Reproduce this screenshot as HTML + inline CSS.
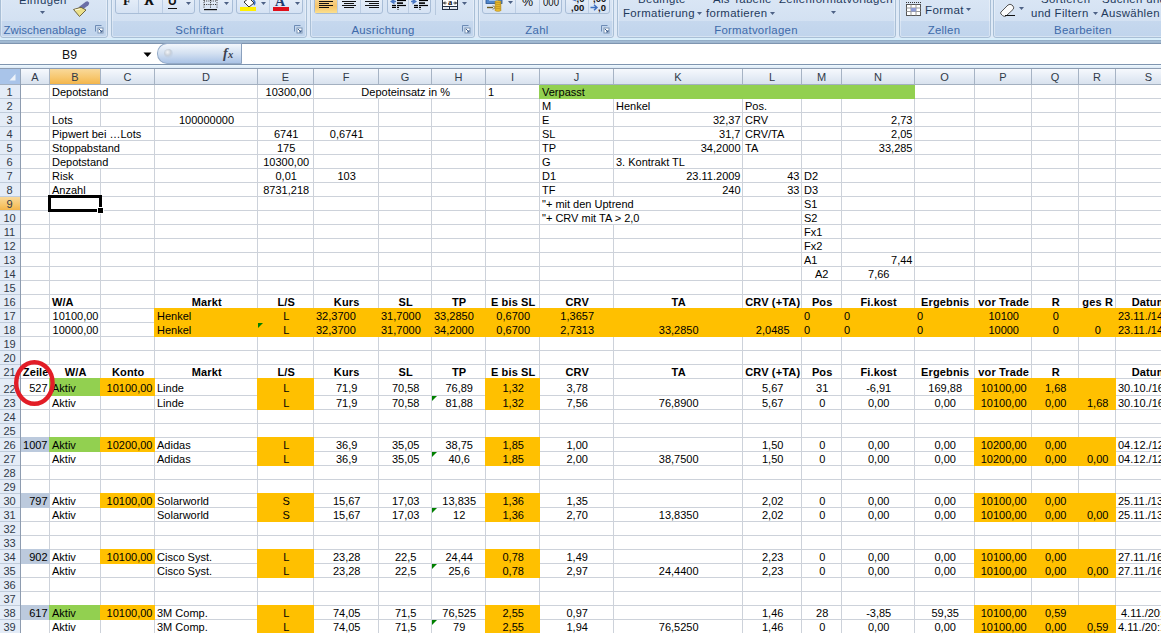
<!DOCTYPE html>
<html><head><meta charset="utf-8"><style>
html,body{margin:0;padding:0;}
body{width:1161px;height:633px;overflow:hidden;position:relative;font-family:"Liberation Sans", sans-serif;background:#fff;}
div{box-sizing:border-box;}
</style></head><body>
<div style="position:absolute;left:0px;top:85px;width:1161px;height:548px;background:#fff;"></div>
<div style="position:absolute;left:21px;top:98px;width:1140px;height:1px;background:#cdd2da;"></div>
<div style="position:absolute;left:21px;top:112px;width:1140px;height:1px;background:#cdd2da;"></div>
<div style="position:absolute;left:21px;top:126px;width:1140px;height:1px;background:#cdd2da;"></div>
<div style="position:absolute;left:21px;top:140px;width:1140px;height:1px;background:#cdd2da;"></div>
<div style="position:absolute;left:21px;top:154px;width:1140px;height:1px;background:#cdd2da;"></div>
<div style="position:absolute;left:21px;top:168px;width:1140px;height:1px;background:#cdd2da;"></div>
<div style="position:absolute;left:21px;top:182px;width:1140px;height:1px;background:#cdd2da;"></div>
<div style="position:absolute;left:21px;top:196px;width:1140px;height:1px;background:#cdd2da;"></div>
<div style="position:absolute;left:21px;top:210px;width:1140px;height:1px;background:#cdd2da;"></div>
<div style="position:absolute;left:21px;top:224px;width:1140px;height:1px;background:#cdd2da;"></div>
<div style="position:absolute;left:21px;top:238px;width:1140px;height:1px;background:#cdd2da;"></div>
<div style="position:absolute;left:21px;top:252px;width:1140px;height:1px;background:#cdd2da;"></div>
<div style="position:absolute;left:21px;top:266px;width:1140px;height:1px;background:#cdd2da;"></div>
<div style="position:absolute;left:21px;top:280px;width:1140px;height:1px;background:#cdd2da;"></div>
<div style="position:absolute;left:21px;top:294px;width:1140px;height:1px;background:#cdd2da;"></div>
<div style="position:absolute;left:21px;top:308px;width:1140px;height:1px;background:#cdd2da;"></div>
<div style="position:absolute;left:21px;top:322px;width:1140px;height:1px;background:#cdd2da;"></div>
<div style="position:absolute;left:21px;top:336px;width:1140px;height:1px;background:#cdd2da;"></div>
<div style="position:absolute;left:21px;top:350px;width:1140px;height:1px;background:#cdd2da;"></div>
<div style="position:absolute;left:21px;top:364px;width:1140px;height:1px;background:#cdd2da;"></div>
<div style="position:absolute;left:21px;top:378px;width:1140px;height:1px;background:#cdd2da;"></div>
<div style="position:absolute;left:21px;top:395px;width:1140px;height:1px;background:#cdd2da;"></div>
<div style="position:absolute;left:21px;top:409px;width:1140px;height:1px;background:#cdd2da;"></div>
<div style="position:absolute;left:21px;top:423px;width:1140px;height:1px;background:#cdd2da;"></div>
<div style="position:absolute;left:21px;top:437px;width:1140px;height:1px;background:#cdd2da;"></div>
<div style="position:absolute;left:21px;top:451px;width:1140px;height:1px;background:#cdd2da;"></div>
<div style="position:absolute;left:21px;top:465px;width:1140px;height:1px;background:#cdd2da;"></div>
<div style="position:absolute;left:21px;top:479px;width:1140px;height:1px;background:#cdd2da;"></div>
<div style="position:absolute;left:21px;top:493px;width:1140px;height:1px;background:#cdd2da;"></div>
<div style="position:absolute;left:21px;top:507px;width:1140px;height:1px;background:#cdd2da;"></div>
<div style="position:absolute;left:21px;top:521px;width:1140px;height:1px;background:#cdd2da;"></div>
<div style="position:absolute;left:21px;top:535px;width:1140px;height:1px;background:#cdd2da;"></div>
<div style="position:absolute;left:21px;top:549px;width:1140px;height:1px;background:#cdd2da;"></div>
<div style="position:absolute;left:21px;top:563px;width:1140px;height:1px;background:#cdd2da;"></div>
<div style="position:absolute;left:21px;top:577px;width:1140px;height:1px;background:#cdd2da;"></div>
<div style="position:absolute;left:21px;top:591px;width:1140px;height:1px;background:#cdd2da;"></div>
<div style="position:absolute;left:21px;top:605px;width:1140px;height:1px;background:#cdd2da;"></div>
<div style="position:absolute;left:21px;top:619px;width:1140px;height:1px;background:#cdd2da;"></div>
<div style="position:absolute;left:49px;top:85px;width:1px;height:13px;background:#cdd2da;"></div>
<div style="position:absolute;left:154px;top:85px;width:1px;height:13px;background:#cdd2da;"></div>
<div style="position:absolute;left:257px;top:85px;width:1px;height:13px;background:#cdd2da;"></div>
<div style="position:absolute;left:313px;top:85px;width:1px;height:13px;background:#cdd2da;"></div>
<div style="position:absolute;left:485px;top:85px;width:1px;height:13px;background:#cdd2da;"></div>
<div style="position:absolute;left:539px;top:85px;width:1px;height:13px;background:#cdd2da;"></div>
<div style="position:absolute;left:613px;top:85px;width:1px;height:13px;background:#cdd2da;"></div>
<div style="position:absolute;left:742px;top:85px;width:1px;height:13px;background:#cdd2da;"></div>
<div style="position:absolute;left:801px;top:85px;width:1px;height:13px;background:#cdd2da;"></div>
<div style="position:absolute;left:841px;top:85px;width:1px;height:13px;background:#cdd2da;"></div>
<div style="position:absolute;left:914px;top:85px;width:1px;height:13px;background:#cdd2da;"></div>
<div style="position:absolute;left:974px;top:85px;width:1px;height:13px;background:#cdd2da;"></div>
<div style="position:absolute;left:1031px;top:85px;width:1px;height:13px;background:#cdd2da;"></div>
<div style="position:absolute;left:1078px;top:85px;width:1px;height:13px;background:#cdd2da;"></div>
<div style="position:absolute;left:1115px;top:85px;width:1px;height:13px;background:#cdd2da;"></div>
<div style="position:absolute;left:49px;top:99px;width:1px;height:13px;background:#cdd2da;"></div>
<div style="position:absolute;left:100px;top:99px;width:1px;height:13px;background:#cdd2da;"></div>
<div style="position:absolute;left:154px;top:99px;width:1px;height:13px;background:#cdd2da;"></div>
<div style="position:absolute;left:257px;top:99px;width:1px;height:13px;background:#cdd2da;"></div>
<div style="position:absolute;left:313px;top:99px;width:1px;height:13px;background:#cdd2da;"></div>
<div style="position:absolute;left:378px;top:99px;width:1px;height:13px;background:#cdd2da;"></div>
<div style="position:absolute;left:431px;top:99px;width:1px;height:13px;background:#cdd2da;"></div>
<div style="position:absolute;left:485px;top:99px;width:1px;height:13px;background:#cdd2da;"></div>
<div style="position:absolute;left:539px;top:99px;width:1px;height:13px;background:#cdd2da;"></div>
<div style="position:absolute;left:613px;top:99px;width:1px;height:13px;background:#cdd2da;"></div>
<div style="position:absolute;left:742px;top:99px;width:1px;height:13px;background:#cdd2da;"></div>
<div style="position:absolute;left:801px;top:99px;width:1px;height:13px;background:#cdd2da;"></div>
<div style="position:absolute;left:841px;top:99px;width:1px;height:13px;background:#cdd2da;"></div>
<div style="position:absolute;left:914px;top:99px;width:1px;height:13px;background:#cdd2da;"></div>
<div style="position:absolute;left:974px;top:99px;width:1px;height:13px;background:#cdd2da;"></div>
<div style="position:absolute;left:1031px;top:99px;width:1px;height:13px;background:#cdd2da;"></div>
<div style="position:absolute;left:1078px;top:99px;width:1px;height:13px;background:#cdd2da;"></div>
<div style="position:absolute;left:1115px;top:99px;width:1px;height:13px;background:#cdd2da;"></div>
<div style="position:absolute;left:49px;top:113px;width:1px;height:13px;background:#cdd2da;"></div>
<div style="position:absolute;left:100px;top:113px;width:1px;height:13px;background:#cdd2da;"></div>
<div style="position:absolute;left:154px;top:113px;width:1px;height:13px;background:#cdd2da;"></div>
<div style="position:absolute;left:257px;top:113px;width:1px;height:13px;background:#cdd2da;"></div>
<div style="position:absolute;left:313px;top:113px;width:1px;height:13px;background:#cdd2da;"></div>
<div style="position:absolute;left:378px;top:113px;width:1px;height:13px;background:#cdd2da;"></div>
<div style="position:absolute;left:431px;top:113px;width:1px;height:13px;background:#cdd2da;"></div>
<div style="position:absolute;left:485px;top:113px;width:1px;height:13px;background:#cdd2da;"></div>
<div style="position:absolute;left:539px;top:113px;width:1px;height:13px;background:#cdd2da;"></div>
<div style="position:absolute;left:613px;top:113px;width:1px;height:13px;background:#cdd2da;"></div>
<div style="position:absolute;left:742px;top:113px;width:1px;height:13px;background:#cdd2da;"></div>
<div style="position:absolute;left:801px;top:113px;width:1px;height:13px;background:#cdd2da;"></div>
<div style="position:absolute;left:841px;top:113px;width:1px;height:13px;background:#cdd2da;"></div>
<div style="position:absolute;left:914px;top:113px;width:1px;height:13px;background:#cdd2da;"></div>
<div style="position:absolute;left:974px;top:113px;width:1px;height:13px;background:#cdd2da;"></div>
<div style="position:absolute;left:1031px;top:113px;width:1px;height:13px;background:#cdd2da;"></div>
<div style="position:absolute;left:1078px;top:113px;width:1px;height:13px;background:#cdd2da;"></div>
<div style="position:absolute;left:1115px;top:113px;width:1px;height:13px;background:#cdd2da;"></div>
<div style="position:absolute;left:49px;top:127px;width:1px;height:13px;background:#cdd2da;"></div>
<div style="position:absolute;left:154px;top:127px;width:1px;height:13px;background:#cdd2da;"></div>
<div style="position:absolute;left:257px;top:127px;width:1px;height:13px;background:#cdd2da;"></div>
<div style="position:absolute;left:313px;top:127px;width:1px;height:13px;background:#cdd2da;"></div>
<div style="position:absolute;left:378px;top:127px;width:1px;height:13px;background:#cdd2da;"></div>
<div style="position:absolute;left:431px;top:127px;width:1px;height:13px;background:#cdd2da;"></div>
<div style="position:absolute;left:485px;top:127px;width:1px;height:13px;background:#cdd2da;"></div>
<div style="position:absolute;left:539px;top:127px;width:1px;height:13px;background:#cdd2da;"></div>
<div style="position:absolute;left:613px;top:127px;width:1px;height:13px;background:#cdd2da;"></div>
<div style="position:absolute;left:742px;top:127px;width:1px;height:13px;background:#cdd2da;"></div>
<div style="position:absolute;left:801px;top:127px;width:1px;height:13px;background:#cdd2da;"></div>
<div style="position:absolute;left:841px;top:127px;width:1px;height:13px;background:#cdd2da;"></div>
<div style="position:absolute;left:914px;top:127px;width:1px;height:13px;background:#cdd2da;"></div>
<div style="position:absolute;left:974px;top:127px;width:1px;height:13px;background:#cdd2da;"></div>
<div style="position:absolute;left:1031px;top:127px;width:1px;height:13px;background:#cdd2da;"></div>
<div style="position:absolute;left:1078px;top:127px;width:1px;height:13px;background:#cdd2da;"></div>
<div style="position:absolute;left:1115px;top:127px;width:1px;height:13px;background:#cdd2da;"></div>
<div style="position:absolute;left:49px;top:141px;width:1px;height:13px;background:#cdd2da;"></div>
<div style="position:absolute;left:154px;top:141px;width:1px;height:13px;background:#cdd2da;"></div>
<div style="position:absolute;left:257px;top:141px;width:1px;height:13px;background:#cdd2da;"></div>
<div style="position:absolute;left:313px;top:141px;width:1px;height:13px;background:#cdd2da;"></div>
<div style="position:absolute;left:378px;top:141px;width:1px;height:13px;background:#cdd2da;"></div>
<div style="position:absolute;left:431px;top:141px;width:1px;height:13px;background:#cdd2da;"></div>
<div style="position:absolute;left:485px;top:141px;width:1px;height:13px;background:#cdd2da;"></div>
<div style="position:absolute;left:539px;top:141px;width:1px;height:13px;background:#cdd2da;"></div>
<div style="position:absolute;left:613px;top:141px;width:1px;height:13px;background:#cdd2da;"></div>
<div style="position:absolute;left:742px;top:141px;width:1px;height:13px;background:#cdd2da;"></div>
<div style="position:absolute;left:801px;top:141px;width:1px;height:13px;background:#cdd2da;"></div>
<div style="position:absolute;left:841px;top:141px;width:1px;height:13px;background:#cdd2da;"></div>
<div style="position:absolute;left:914px;top:141px;width:1px;height:13px;background:#cdd2da;"></div>
<div style="position:absolute;left:974px;top:141px;width:1px;height:13px;background:#cdd2da;"></div>
<div style="position:absolute;left:1031px;top:141px;width:1px;height:13px;background:#cdd2da;"></div>
<div style="position:absolute;left:1078px;top:141px;width:1px;height:13px;background:#cdd2da;"></div>
<div style="position:absolute;left:1115px;top:141px;width:1px;height:13px;background:#cdd2da;"></div>
<div style="position:absolute;left:49px;top:155px;width:1px;height:13px;background:#cdd2da;"></div>
<div style="position:absolute;left:154px;top:155px;width:1px;height:13px;background:#cdd2da;"></div>
<div style="position:absolute;left:257px;top:155px;width:1px;height:13px;background:#cdd2da;"></div>
<div style="position:absolute;left:313px;top:155px;width:1px;height:13px;background:#cdd2da;"></div>
<div style="position:absolute;left:378px;top:155px;width:1px;height:13px;background:#cdd2da;"></div>
<div style="position:absolute;left:431px;top:155px;width:1px;height:13px;background:#cdd2da;"></div>
<div style="position:absolute;left:485px;top:155px;width:1px;height:13px;background:#cdd2da;"></div>
<div style="position:absolute;left:539px;top:155px;width:1px;height:13px;background:#cdd2da;"></div>
<div style="position:absolute;left:613px;top:155px;width:1px;height:13px;background:#cdd2da;"></div>
<div style="position:absolute;left:742px;top:155px;width:1px;height:13px;background:#cdd2da;"></div>
<div style="position:absolute;left:801px;top:155px;width:1px;height:13px;background:#cdd2da;"></div>
<div style="position:absolute;left:841px;top:155px;width:1px;height:13px;background:#cdd2da;"></div>
<div style="position:absolute;left:914px;top:155px;width:1px;height:13px;background:#cdd2da;"></div>
<div style="position:absolute;left:974px;top:155px;width:1px;height:13px;background:#cdd2da;"></div>
<div style="position:absolute;left:1031px;top:155px;width:1px;height:13px;background:#cdd2da;"></div>
<div style="position:absolute;left:1078px;top:155px;width:1px;height:13px;background:#cdd2da;"></div>
<div style="position:absolute;left:1115px;top:155px;width:1px;height:13px;background:#cdd2da;"></div>
<div style="position:absolute;left:49px;top:169px;width:1px;height:13px;background:#cdd2da;"></div>
<div style="position:absolute;left:100px;top:169px;width:1px;height:13px;background:#cdd2da;"></div>
<div style="position:absolute;left:154px;top:169px;width:1px;height:13px;background:#cdd2da;"></div>
<div style="position:absolute;left:257px;top:169px;width:1px;height:13px;background:#cdd2da;"></div>
<div style="position:absolute;left:313px;top:169px;width:1px;height:13px;background:#cdd2da;"></div>
<div style="position:absolute;left:378px;top:169px;width:1px;height:13px;background:#cdd2da;"></div>
<div style="position:absolute;left:431px;top:169px;width:1px;height:13px;background:#cdd2da;"></div>
<div style="position:absolute;left:485px;top:169px;width:1px;height:13px;background:#cdd2da;"></div>
<div style="position:absolute;left:539px;top:169px;width:1px;height:13px;background:#cdd2da;"></div>
<div style="position:absolute;left:613px;top:169px;width:1px;height:13px;background:#cdd2da;"></div>
<div style="position:absolute;left:742px;top:169px;width:1px;height:13px;background:#cdd2da;"></div>
<div style="position:absolute;left:801px;top:169px;width:1px;height:13px;background:#cdd2da;"></div>
<div style="position:absolute;left:841px;top:169px;width:1px;height:13px;background:#cdd2da;"></div>
<div style="position:absolute;left:914px;top:169px;width:1px;height:13px;background:#cdd2da;"></div>
<div style="position:absolute;left:974px;top:169px;width:1px;height:13px;background:#cdd2da;"></div>
<div style="position:absolute;left:1031px;top:169px;width:1px;height:13px;background:#cdd2da;"></div>
<div style="position:absolute;left:1078px;top:169px;width:1px;height:13px;background:#cdd2da;"></div>
<div style="position:absolute;left:1115px;top:169px;width:1px;height:13px;background:#cdd2da;"></div>
<div style="position:absolute;left:49px;top:183px;width:1px;height:13px;background:#cdd2da;"></div>
<div style="position:absolute;left:100px;top:183px;width:1px;height:13px;background:#cdd2da;"></div>
<div style="position:absolute;left:154px;top:183px;width:1px;height:13px;background:#cdd2da;"></div>
<div style="position:absolute;left:257px;top:183px;width:1px;height:13px;background:#cdd2da;"></div>
<div style="position:absolute;left:313px;top:183px;width:1px;height:13px;background:#cdd2da;"></div>
<div style="position:absolute;left:378px;top:183px;width:1px;height:13px;background:#cdd2da;"></div>
<div style="position:absolute;left:431px;top:183px;width:1px;height:13px;background:#cdd2da;"></div>
<div style="position:absolute;left:485px;top:183px;width:1px;height:13px;background:#cdd2da;"></div>
<div style="position:absolute;left:539px;top:183px;width:1px;height:13px;background:#cdd2da;"></div>
<div style="position:absolute;left:613px;top:183px;width:1px;height:13px;background:#cdd2da;"></div>
<div style="position:absolute;left:742px;top:183px;width:1px;height:13px;background:#cdd2da;"></div>
<div style="position:absolute;left:801px;top:183px;width:1px;height:13px;background:#cdd2da;"></div>
<div style="position:absolute;left:841px;top:183px;width:1px;height:13px;background:#cdd2da;"></div>
<div style="position:absolute;left:914px;top:183px;width:1px;height:13px;background:#cdd2da;"></div>
<div style="position:absolute;left:974px;top:183px;width:1px;height:13px;background:#cdd2da;"></div>
<div style="position:absolute;left:1031px;top:183px;width:1px;height:13px;background:#cdd2da;"></div>
<div style="position:absolute;left:1078px;top:183px;width:1px;height:13px;background:#cdd2da;"></div>
<div style="position:absolute;left:1115px;top:183px;width:1px;height:13px;background:#cdd2da;"></div>
<div style="position:absolute;left:49px;top:197px;width:1px;height:13px;background:#cdd2da;"></div>
<div style="position:absolute;left:100px;top:197px;width:1px;height:13px;background:#cdd2da;"></div>
<div style="position:absolute;left:154px;top:197px;width:1px;height:13px;background:#cdd2da;"></div>
<div style="position:absolute;left:257px;top:197px;width:1px;height:13px;background:#cdd2da;"></div>
<div style="position:absolute;left:313px;top:197px;width:1px;height:13px;background:#cdd2da;"></div>
<div style="position:absolute;left:378px;top:197px;width:1px;height:13px;background:#cdd2da;"></div>
<div style="position:absolute;left:431px;top:197px;width:1px;height:13px;background:#cdd2da;"></div>
<div style="position:absolute;left:485px;top:197px;width:1px;height:13px;background:#cdd2da;"></div>
<div style="position:absolute;left:539px;top:197px;width:1px;height:13px;background:#cdd2da;"></div>
<div style="position:absolute;left:742px;top:197px;width:1px;height:13px;background:#cdd2da;"></div>
<div style="position:absolute;left:801px;top:197px;width:1px;height:13px;background:#cdd2da;"></div>
<div style="position:absolute;left:841px;top:197px;width:1px;height:13px;background:#cdd2da;"></div>
<div style="position:absolute;left:914px;top:197px;width:1px;height:13px;background:#cdd2da;"></div>
<div style="position:absolute;left:974px;top:197px;width:1px;height:13px;background:#cdd2da;"></div>
<div style="position:absolute;left:1031px;top:197px;width:1px;height:13px;background:#cdd2da;"></div>
<div style="position:absolute;left:1078px;top:197px;width:1px;height:13px;background:#cdd2da;"></div>
<div style="position:absolute;left:1115px;top:197px;width:1px;height:13px;background:#cdd2da;"></div>
<div style="position:absolute;left:49px;top:211px;width:1px;height:13px;background:#cdd2da;"></div>
<div style="position:absolute;left:100px;top:211px;width:1px;height:13px;background:#cdd2da;"></div>
<div style="position:absolute;left:154px;top:211px;width:1px;height:13px;background:#cdd2da;"></div>
<div style="position:absolute;left:257px;top:211px;width:1px;height:13px;background:#cdd2da;"></div>
<div style="position:absolute;left:313px;top:211px;width:1px;height:13px;background:#cdd2da;"></div>
<div style="position:absolute;left:378px;top:211px;width:1px;height:13px;background:#cdd2da;"></div>
<div style="position:absolute;left:431px;top:211px;width:1px;height:13px;background:#cdd2da;"></div>
<div style="position:absolute;left:485px;top:211px;width:1px;height:13px;background:#cdd2da;"></div>
<div style="position:absolute;left:539px;top:211px;width:1px;height:13px;background:#cdd2da;"></div>
<div style="position:absolute;left:742px;top:211px;width:1px;height:13px;background:#cdd2da;"></div>
<div style="position:absolute;left:801px;top:211px;width:1px;height:13px;background:#cdd2da;"></div>
<div style="position:absolute;left:841px;top:211px;width:1px;height:13px;background:#cdd2da;"></div>
<div style="position:absolute;left:914px;top:211px;width:1px;height:13px;background:#cdd2da;"></div>
<div style="position:absolute;left:974px;top:211px;width:1px;height:13px;background:#cdd2da;"></div>
<div style="position:absolute;left:1031px;top:211px;width:1px;height:13px;background:#cdd2da;"></div>
<div style="position:absolute;left:1078px;top:211px;width:1px;height:13px;background:#cdd2da;"></div>
<div style="position:absolute;left:1115px;top:211px;width:1px;height:13px;background:#cdd2da;"></div>
<div style="position:absolute;left:49px;top:225px;width:1px;height:13px;background:#cdd2da;"></div>
<div style="position:absolute;left:100px;top:225px;width:1px;height:13px;background:#cdd2da;"></div>
<div style="position:absolute;left:154px;top:225px;width:1px;height:13px;background:#cdd2da;"></div>
<div style="position:absolute;left:257px;top:225px;width:1px;height:13px;background:#cdd2da;"></div>
<div style="position:absolute;left:313px;top:225px;width:1px;height:13px;background:#cdd2da;"></div>
<div style="position:absolute;left:378px;top:225px;width:1px;height:13px;background:#cdd2da;"></div>
<div style="position:absolute;left:431px;top:225px;width:1px;height:13px;background:#cdd2da;"></div>
<div style="position:absolute;left:485px;top:225px;width:1px;height:13px;background:#cdd2da;"></div>
<div style="position:absolute;left:539px;top:225px;width:1px;height:13px;background:#cdd2da;"></div>
<div style="position:absolute;left:613px;top:225px;width:1px;height:13px;background:#cdd2da;"></div>
<div style="position:absolute;left:742px;top:225px;width:1px;height:13px;background:#cdd2da;"></div>
<div style="position:absolute;left:801px;top:225px;width:1px;height:13px;background:#cdd2da;"></div>
<div style="position:absolute;left:841px;top:225px;width:1px;height:13px;background:#cdd2da;"></div>
<div style="position:absolute;left:914px;top:225px;width:1px;height:13px;background:#cdd2da;"></div>
<div style="position:absolute;left:974px;top:225px;width:1px;height:13px;background:#cdd2da;"></div>
<div style="position:absolute;left:1031px;top:225px;width:1px;height:13px;background:#cdd2da;"></div>
<div style="position:absolute;left:1078px;top:225px;width:1px;height:13px;background:#cdd2da;"></div>
<div style="position:absolute;left:1115px;top:225px;width:1px;height:13px;background:#cdd2da;"></div>
<div style="position:absolute;left:49px;top:239px;width:1px;height:13px;background:#cdd2da;"></div>
<div style="position:absolute;left:100px;top:239px;width:1px;height:13px;background:#cdd2da;"></div>
<div style="position:absolute;left:154px;top:239px;width:1px;height:13px;background:#cdd2da;"></div>
<div style="position:absolute;left:257px;top:239px;width:1px;height:13px;background:#cdd2da;"></div>
<div style="position:absolute;left:313px;top:239px;width:1px;height:13px;background:#cdd2da;"></div>
<div style="position:absolute;left:378px;top:239px;width:1px;height:13px;background:#cdd2da;"></div>
<div style="position:absolute;left:431px;top:239px;width:1px;height:13px;background:#cdd2da;"></div>
<div style="position:absolute;left:485px;top:239px;width:1px;height:13px;background:#cdd2da;"></div>
<div style="position:absolute;left:539px;top:239px;width:1px;height:13px;background:#cdd2da;"></div>
<div style="position:absolute;left:613px;top:239px;width:1px;height:13px;background:#cdd2da;"></div>
<div style="position:absolute;left:742px;top:239px;width:1px;height:13px;background:#cdd2da;"></div>
<div style="position:absolute;left:801px;top:239px;width:1px;height:13px;background:#cdd2da;"></div>
<div style="position:absolute;left:841px;top:239px;width:1px;height:13px;background:#cdd2da;"></div>
<div style="position:absolute;left:914px;top:239px;width:1px;height:13px;background:#cdd2da;"></div>
<div style="position:absolute;left:974px;top:239px;width:1px;height:13px;background:#cdd2da;"></div>
<div style="position:absolute;left:1031px;top:239px;width:1px;height:13px;background:#cdd2da;"></div>
<div style="position:absolute;left:1078px;top:239px;width:1px;height:13px;background:#cdd2da;"></div>
<div style="position:absolute;left:1115px;top:239px;width:1px;height:13px;background:#cdd2da;"></div>
<div style="position:absolute;left:49px;top:253px;width:1px;height:13px;background:#cdd2da;"></div>
<div style="position:absolute;left:100px;top:253px;width:1px;height:13px;background:#cdd2da;"></div>
<div style="position:absolute;left:154px;top:253px;width:1px;height:13px;background:#cdd2da;"></div>
<div style="position:absolute;left:257px;top:253px;width:1px;height:13px;background:#cdd2da;"></div>
<div style="position:absolute;left:313px;top:253px;width:1px;height:13px;background:#cdd2da;"></div>
<div style="position:absolute;left:378px;top:253px;width:1px;height:13px;background:#cdd2da;"></div>
<div style="position:absolute;left:431px;top:253px;width:1px;height:13px;background:#cdd2da;"></div>
<div style="position:absolute;left:485px;top:253px;width:1px;height:13px;background:#cdd2da;"></div>
<div style="position:absolute;left:539px;top:253px;width:1px;height:13px;background:#cdd2da;"></div>
<div style="position:absolute;left:613px;top:253px;width:1px;height:13px;background:#cdd2da;"></div>
<div style="position:absolute;left:742px;top:253px;width:1px;height:13px;background:#cdd2da;"></div>
<div style="position:absolute;left:801px;top:253px;width:1px;height:13px;background:#cdd2da;"></div>
<div style="position:absolute;left:841px;top:253px;width:1px;height:13px;background:#cdd2da;"></div>
<div style="position:absolute;left:914px;top:253px;width:1px;height:13px;background:#cdd2da;"></div>
<div style="position:absolute;left:974px;top:253px;width:1px;height:13px;background:#cdd2da;"></div>
<div style="position:absolute;left:1031px;top:253px;width:1px;height:13px;background:#cdd2da;"></div>
<div style="position:absolute;left:1078px;top:253px;width:1px;height:13px;background:#cdd2da;"></div>
<div style="position:absolute;left:1115px;top:253px;width:1px;height:13px;background:#cdd2da;"></div>
<div style="position:absolute;left:49px;top:267px;width:1px;height:13px;background:#cdd2da;"></div>
<div style="position:absolute;left:100px;top:267px;width:1px;height:13px;background:#cdd2da;"></div>
<div style="position:absolute;left:154px;top:267px;width:1px;height:13px;background:#cdd2da;"></div>
<div style="position:absolute;left:257px;top:267px;width:1px;height:13px;background:#cdd2da;"></div>
<div style="position:absolute;left:313px;top:267px;width:1px;height:13px;background:#cdd2da;"></div>
<div style="position:absolute;left:378px;top:267px;width:1px;height:13px;background:#cdd2da;"></div>
<div style="position:absolute;left:431px;top:267px;width:1px;height:13px;background:#cdd2da;"></div>
<div style="position:absolute;left:485px;top:267px;width:1px;height:13px;background:#cdd2da;"></div>
<div style="position:absolute;left:539px;top:267px;width:1px;height:13px;background:#cdd2da;"></div>
<div style="position:absolute;left:613px;top:267px;width:1px;height:13px;background:#cdd2da;"></div>
<div style="position:absolute;left:742px;top:267px;width:1px;height:13px;background:#cdd2da;"></div>
<div style="position:absolute;left:801px;top:267px;width:1px;height:13px;background:#cdd2da;"></div>
<div style="position:absolute;left:841px;top:267px;width:1px;height:13px;background:#cdd2da;"></div>
<div style="position:absolute;left:914px;top:267px;width:1px;height:13px;background:#cdd2da;"></div>
<div style="position:absolute;left:974px;top:267px;width:1px;height:13px;background:#cdd2da;"></div>
<div style="position:absolute;left:1031px;top:267px;width:1px;height:13px;background:#cdd2da;"></div>
<div style="position:absolute;left:1078px;top:267px;width:1px;height:13px;background:#cdd2da;"></div>
<div style="position:absolute;left:1115px;top:267px;width:1px;height:13px;background:#cdd2da;"></div>
<div style="position:absolute;left:49px;top:281px;width:1px;height:13px;background:#cdd2da;"></div>
<div style="position:absolute;left:100px;top:281px;width:1px;height:13px;background:#cdd2da;"></div>
<div style="position:absolute;left:154px;top:281px;width:1px;height:13px;background:#cdd2da;"></div>
<div style="position:absolute;left:257px;top:281px;width:1px;height:13px;background:#cdd2da;"></div>
<div style="position:absolute;left:313px;top:281px;width:1px;height:13px;background:#cdd2da;"></div>
<div style="position:absolute;left:378px;top:281px;width:1px;height:13px;background:#cdd2da;"></div>
<div style="position:absolute;left:431px;top:281px;width:1px;height:13px;background:#cdd2da;"></div>
<div style="position:absolute;left:485px;top:281px;width:1px;height:13px;background:#cdd2da;"></div>
<div style="position:absolute;left:539px;top:281px;width:1px;height:13px;background:#cdd2da;"></div>
<div style="position:absolute;left:613px;top:281px;width:1px;height:13px;background:#cdd2da;"></div>
<div style="position:absolute;left:742px;top:281px;width:1px;height:13px;background:#cdd2da;"></div>
<div style="position:absolute;left:801px;top:281px;width:1px;height:13px;background:#cdd2da;"></div>
<div style="position:absolute;left:841px;top:281px;width:1px;height:13px;background:#cdd2da;"></div>
<div style="position:absolute;left:914px;top:281px;width:1px;height:13px;background:#cdd2da;"></div>
<div style="position:absolute;left:974px;top:281px;width:1px;height:13px;background:#cdd2da;"></div>
<div style="position:absolute;left:1031px;top:281px;width:1px;height:13px;background:#cdd2da;"></div>
<div style="position:absolute;left:1078px;top:281px;width:1px;height:13px;background:#cdd2da;"></div>
<div style="position:absolute;left:1115px;top:281px;width:1px;height:13px;background:#cdd2da;"></div>
<div style="position:absolute;left:49px;top:295px;width:1px;height:13px;background:#cdd2da;"></div>
<div style="position:absolute;left:100px;top:295px;width:1px;height:13px;background:#cdd2da;"></div>
<div style="position:absolute;left:154px;top:295px;width:1px;height:13px;background:#cdd2da;"></div>
<div style="position:absolute;left:257px;top:295px;width:1px;height:13px;background:#cdd2da;"></div>
<div style="position:absolute;left:313px;top:295px;width:1px;height:13px;background:#cdd2da;"></div>
<div style="position:absolute;left:378px;top:295px;width:1px;height:13px;background:#cdd2da;"></div>
<div style="position:absolute;left:431px;top:295px;width:1px;height:13px;background:#cdd2da;"></div>
<div style="position:absolute;left:485px;top:295px;width:1px;height:13px;background:#cdd2da;"></div>
<div style="position:absolute;left:539px;top:295px;width:1px;height:13px;background:#cdd2da;"></div>
<div style="position:absolute;left:613px;top:295px;width:1px;height:13px;background:#cdd2da;"></div>
<div style="position:absolute;left:742px;top:295px;width:1px;height:13px;background:#cdd2da;"></div>
<div style="position:absolute;left:801px;top:295px;width:1px;height:13px;background:#cdd2da;"></div>
<div style="position:absolute;left:841px;top:295px;width:1px;height:13px;background:#cdd2da;"></div>
<div style="position:absolute;left:914px;top:295px;width:1px;height:13px;background:#cdd2da;"></div>
<div style="position:absolute;left:974px;top:295px;width:1px;height:13px;background:#cdd2da;"></div>
<div style="position:absolute;left:1031px;top:295px;width:1px;height:13px;background:#cdd2da;"></div>
<div style="position:absolute;left:1078px;top:295px;width:1px;height:13px;background:#cdd2da;"></div>
<div style="position:absolute;left:1115px;top:295px;width:1px;height:13px;background:#cdd2da;"></div>
<div style="position:absolute;left:49px;top:309px;width:1px;height:13px;background:#cdd2da;"></div>
<div style="position:absolute;left:100px;top:309px;width:1px;height:13px;background:#cdd2da;"></div>
<div style="position:absolute;left:154px;top:309px;width:1px;height:13px;background:#cdd2da;"></div>
<div style="position:absolute;left:257px;top:309px;width:1px;height:13px;background:#cdd2da;"></div>
<div style="position:absolute;left:313px;top:309px;width:1px;height:13px;background:#cdd2da;"></div>
<div style="position:absolute;left:378px;top:309px;width:1px;height:13px;background:#cdd2da;"></div>
<div style="position:absolute;left:431px;top:309px;width:1px;height:13px;background:#cdd2da;"></div>
<div style="position:absolute;left:485px;top:309px;width:1px;height:13px;background:#cdd2da;"></div>
<div style="position:absolute;left:539px;top:309px;width:1px;height:13px;background:#cdd2da;"></div>
<div style="position:absolute;left:613px;top:309px;width:1px;height:13px;background:#cdd2da;"></div>
<div style="position:absolute;left:742px;top:309px;width:1px;height:13px;background:#cdd2da;"></div>
<div style="position:absolute;left:801px;top:309px;width:1px;height:13px;background:#cdd2da;"></div>
<div style="position:absolute;left:841px;top:309px;width:1px;height:13px;background:#cdd2da;"></div>
<div style="position:absolute;left:914px;top:309px;width:1px;height:13px;background:#cdd2da;"></div>
<div style="position:absolute;left:974px;top:309px;width:1px;height:13px;background:#cdd2da;"></div>
<div style="position:absolute;left:1031px;top:309px;width:1px;height:13px;background:#cdd2da;"></div>
<div style="position:absolute;left:1078px;top:309px;width:1px;height:13px;background:#cdd2da;"></div>
<div style="position:absolute;left:1115px;top:309px;width:1px;height:13px;background:#cdd2da;"></div>
<div style="position:absolute;left:49px;top:323px;width:1px;height:13px;background:#cdd2da;"></div>
<div style="position:absolute;left:100px;top:323px;width:1px;height:13px;background:#cdd2da;"></div>
<div style="position:absolute;left:154px;top:323px;width:1px;height:13px;background:#cdd2da;"></div>
<div style="position:absolute;left:257px;top:323px;width:1px;height:13px;background:#cdd2da;"></div>
<div style="position:absolute;left:313px;top:323px;width:1px;height:13px;background:#cdd2da;"></div>
<div style="position:absolute;left:378px;top:323px;width:1px;height:13px;background:#cdd2da;"></div>
<div style="position:absolute;left:431px;top:323px;width:1px;height:13px;background:#cdd2da;"></div>
<div style="position:absolute;left:485px;top:323px;width:1px;height:13px;background:#cdd2da;"></div>
<div style="position:absolute;left:539px;top:323px;width:1px;height:13px;background:#cdd2da;"></div>
<div style="position:absolute;left:613px;top:323px;width:1px;height:13px;background:#cdd2da;"></div>
<div style="position:absolute;left:742px;top:323px;width:1px;height:13px;background:#cdd2da;"></div>
<div style="position:absolute;left:801px;top:323px;width:1px;height:13px;background:#cdd2da;"></div>
<div style="position:absolute;left:841px;top:323px;width:1px;height:13px;background:#cdd2da;"></div>
<div style="position:absolute;left:914px;top:323px;width:1px;height:13px;background:#cdd2da;"></div>
<div style="position:absolute;left:974px;top:323px;width:1px;height:13px;background:#cdd2da;"></div>
<div style="position:absolute;left:1031px;top:323px;width:1px;height:13px;background:#cdd2da;"></div>
<div style="position:absolute;left:1078px;top:323px;width:1px;height:13px;background:#cdd2da;"></div>
<div style="position:absolute;left:1115px;top:323px;width:1px;height:13px;background:#cdd2da;"></div>
<div style="position:absolute;left:49px;top:337px;width:1px;height:13px;background:#cdd2da;"></div>
<div style="position:absolute;left:100px;top:337px;width:1px;height:13px;background:#cdd2da;"></div>
<div style="position:absolute;left:154px;top:337px;width:1px;height:13px;background:#cdd2da;"></div>
<div style="position:absolute;left:257px;top:337px;width:1px;height:13px;background:#cdd2da;"></div>
<div style="position:absolute;left:313px;top:337px;width:1px;height:13px;background:#cdd2da;"></div>
<div style="position:absolute;left:378px;top:337px;width:1px;height:13px;background:#cdd2da;"></div>
<div style="position:absolute;left:431px;top:337px;width:1px;height:13px;background:#cdd2da;"></div>
<div style="position:absolute;left:485px;top:337px;width:1px;height:13px;background:#cdd2da;"></div>
<div style="position:absolute;left:539px;top:337px;width:1px;height:13px;background:#cdd2da;"></div>
<div style="position:absolute;left:613px;top:337px;width:1px;height:13px;background:#cdd2da;"></div>
<div style="position:absolute;left:742px;top:337px;width:1px;height:13px;background:#cdd2da;"></div>
<div style="position:absolute;left:801px;top:337px;width:1px;height:13px;background:#cdd2da;"></div>
<div style="position:absolute;left:841px;top:337px;width:1px;height:13px;background:#cdd2da;"></div>
<div style="position:absolute;left:914px;top:337px;width:1px;height:13px;background:#cdd2da;"></div>
<div style="position:absolute;left:974px;top:337px;width:1px;height:13px;background:#cdd2da;"></div>
<div style="position:absolute;left:1031px;top:337px;width:1px;height:13px;background:#cdd2da;"></div>
<div style="position:absolute;left:1078px;top:337px;width:1px;height:13px;background:#cdd2da;"></div>
<div style="position:absolute;left:1115px;top:337px;width:1px;height:13px;background:#cdd2da;"></div>
<div style="position:absolute;left:49px;top:351px;width:1px;height:13px;background:#cdd2da;"></div>
<div style="position:absolute;left:100px;top:351px;width:1px;height:13px;background:#cdd2da;"></div>
<div style="position:absolute;left:154px;top:351px;width:1px;height:13px;background:#cdd2da;"></div>
<div style="position:absolute;left:257px;top:351px;width:1px;height:13px;background:#cdd2da;"></div>
<div style="position:absolute;left:313px;top:351px;width:1px;height:13px;background:#cdd2da;"></div>
<div style="position:absolute;left:378px;top:351px;width:1px;height:13px;background:#cdd2da;"></div>
<div style="position:absolute;left:431px;top:351px;width:1px;height:13px;background:#cdd2da;"></div>
<div style="position:absolute;left:485px;top:351px;width:1px;height:13px;background:#cdd2da;"></div>
<div style="position:absolute;left:539px;top:351px;width:1px;height:13px;background:#cdd2da;"></div>
<div style="position:absolute;left:613px;top:351px;width:1px;height:13px;background:#cdd2da;"></div>
<div style="position:absolute;left:742px;top:351px;width:1px;height:13px;background:#cdd2da;"></div>
<div style="position:absolute;left:801px;top:351px;width:1px;height:13px;background:#cdd2da;"></div>
<div style="position:absolute;left:841px;top:351px;width:1px;height:13px;background:#cdd2da;"></div>
<div style="position:absolute;left:914px;top:351px;width:1px;height:13px;background:#cdd2da;"></div>
<div style="position:absolute;left:974px;top:351px;width:1px;height:13px;background:#cdd2da;"></div>
<div style="position:absolute;left:1031px;top:351px;width:1px;height:13px;background:#cdd2da;"></div>
<div style="position:absolute;left:1078px;top:351px;width:1px;height:13px;background:#cdd2da;"></div>
<div style="position:absolute;left:1115px;top:351px;width:1px;height:13px;background:#cdd2da;"></div>
<div style="position:absolute;left:100px;top:365px;width:1px;height:13px;background:#cdd2da;"></div>
<div style="position:absolute;left:154px;top:365px;width:1px;height:13px;background:#cdd2da;"></div>
<div style="position:absolute;left:257px;top:365px;width:1px;height:13px;background:#cdd2da;"></div>
<div style="position:absolute;left:313px;top:365px;width:1px;height:13px;background:#cdd2da;"></div>
<div style="position:absolute;left:378px;top:365px;width:1px;height:13px;background:#cdd2da;"></div>
<div style="position:absolute;left:431px;top:365px;width:1px;height:13px;background:#cdd2da;"></div>
<div style="position:absolute;left:485px;top:365px;width:1px;height:13px;background:#cdd2da;"></div>
<div style="position:absolute;left:539px;top:365px;width:1px;height:13px;background:#cdd2da;"></div>
<div style="position:absolute;left:613px;top:365px;width:1px;height:13px;background:#cdd2da;"></div>
<div style="position:absolute;left:742px;top:365px;width:1px;height:13px;background:#cdd2da;"></div>
<div style="position:absolute;left:801px;top:365px;width:1px;height:13px;background:#cdd2da;"></div>
<div style="position:absolute;left:841px;top:365px;width:1px;height:13px;background:#cdd2da;"></div>
<div style="position:absolute;left:914px;top:365px;width:1px;height:13px;background:#cdd2da;"></div>
<div style="position:absolute;left:974px;top:365px;width:1px;height:13px;background:#cdd2da;"></div>
<div style="position:absolute;left:1031px;top:365px;width:1px;height:13px;background:#cdd2da;"></div>
<div style="position:absolute;left:1078px;top:365px;width:1px;height:13px;background:#cdd2da;"></div>
<div style="position:absolute;left:1115px;top:365px;width:1px;height:13px;background:#cdd2da;"></div>
<div style="position:absolute;left:49px;top:379px;width:1px;height:16px;background:#cdd2da;"></div>
<div style="position:absolute;left:100px;top:379px;width:1px;height:16px;background:#cdd2da;"></div>
<div style="position:absolute;left:154px;top:379px;width:1px;height:16px;background:#cdd2da;"></div>
<div style="position:absolute;left:257px;top:379px;width:1px;height:16px;background:#cdd2da;"></div>
<div style="position:absolute;left:313px;top:379px;width:1px;height:16px;background:#cdd2da;"></div>
<div style="position:absolute;left:378px;top:379px;width:1px;height:16px;background:#cdd2da;"></div>
<div style="position:absolute;left:431px;top:379px;width:1px;height:16px;background:#cdd2da;"></div>
<div style="position:absolute;left:485px;top:379px;width:1px;height:16px;background:#cdd2da;"></div>
<div style="position:absolute;left:539px;top:379px;width:1px;height:16px;background:#cdd2da;"></div>
<div style="position:absolute;left:613px;top:379px;width:1px;height:16px;background:#cdd2da;"></div>
<div style="position:absolute;left:742px;top:379px;width:1px;height:16px;background:#cdd2da;"></div>
<div style="position:absolute;left:801px;top:379px;width:1px;height:16px;background:#cdd2da;"></div>
<div style="position:absolute;left:841px;top:379px;width:1px;height:16px;background:#cdd2da;"></div>
<div style="position:absolute;left:914px;top:379px;width:1px;height:16px;background:#cdd2da;"></div>
<div style="position:absolute;left:974px;top:379px;width:1px;height:16px;background:#cdd2da;"></div>
<div style="position:absolute;left:1031px;top:379px;width:1px;height:16px;background:#cdd2da;"></div>
<div style="position:absolute;left:1078px;top:379px;width:1px;height:16px;background:#cdd2da;"></div>
<div style="position:absolute;left:1115px;top:379px;width:1px;height:16px;background:#cdd2da;"></div>
<div style="position:absolute;left:49px;top:396px;width:1px;height:13px;background:#cdd2da;"></div>
<div style="position:absolute;left:100px;top:396px;width:1px;height:13px;background:#cdd2da;"></div>
<div style="position:absolute;left:154px;top:396px;width:1px;height:13px;background:#cdd2da;"></div>
<div style="position:absolute;left:257px;top:396px;width:1px;height:13px;background:#cdd2da;"></div>
<div style="position:absolute;left:313px;top:396px;width:1px;height:13px;background:#cdd2da;"></div>
<div style="position:absolute;left:378px;top:396px;width:1px;height:13px;background:#cdd2da;"></div>
<div style="position:absolute;left:431px;top:396px;width:1px;height:13px;background:#cdd2da;"></div>
<div style="position:absolute;left:485px;top:396px;width:1px;height:13px;background:#cdd2da;"></div>
<div style="position:absolute;left:539px;top:396px;width:1px;height:13px;background:#cdd2da;"></div>
<div style="position:absolute;left:613px;top:396px;width:1px;height:13px;background:#cdd2da;"></div>
<div style="position:absolute;left:742px;top:396px;width:1px;height:13px;background:#cdd2da;"></div>
<div style="position:absolute;left:801px;top:396px;width:1px;height:13px;background:#cdd2da;"></div>
<div style="position:absolute;left:841px;top:396px;width:1px;height:13px;background:#cdd2da;"></div>
<div style="position:absolute;left:914px;top:396px;width:1px;height:13px;background:#cdd2da;"></div>
<div style="position:absolute;left:974px;top:396px;width:1px;height:13px;background:#cdd2da;"></div>
<div style="position:absolute;left:1031px;top:396px;width:1px;height:13px;background:#cdd2da;"></div>
<div style="position:absolute;left:1078px;top:396px;width:1px;height:13px;background:#cdd2da;"></div>
<div style="position:absolute;left:1115px;top:396px;width:1px;height:13px;background:#cdd2da;"></div>
<div style="position:absolute;left:49px;top:410px;width:1px;height:13px;background:#cdd2da;"></div>
<div style="position:absolute;left:100px;top:410px;width:1px;height:13px;background:#cdd2da;"></div>
<div style="position:absolute;left:154px;top:410px;width:1px;height:13px;background:#cdd2da;"></div>
<div style="position:absolute;left:257px;top:410px;width:1px;height:13px;background:#cdd2da;"></div>
<div style="position:absolute;left:313px;top:410px;width:1px;height:13px;background:#cdd2da;"></div>
<div style="position:absolute;left:378px;top:410px;width:1px;height:13px;background:#cdd2da;"></div>
<div style="position:absolute;left:431px;top:410px;width:1px;height:13px;background:#cdd2da;"></div>
<div style="position:absolute;left:485px;top:410px;width:1px;height:13px;background:#cdd2da;"></div>
<div style="position:absolute;left:539px;top:410px;width:1px;height:13px;background:#cdd2da;"></div>
<div style="position:absolute;left:613px;top:410px;width:1px;height:13px;background:#cdd2da;"></div>
<div style="position:absolute;left:742px;top:410px;width:1px;height:13px;background:#cdd2da;"></div>
<div style="position:absolute;left:801px;top:410px;width:1px;height:13px;background:#cdd2da;"></div>
<div style="position:absolute;left:841px;top:410px;width:1px;height:13px;background:#cdd2da;"></div>
<div style="position:absolute;left:914px;top:410px;width:1px;height:13px;background:#cdd2da;"></div>
<div style="position:absolute;left:974px;top:410px;width:1px;height:13px;background:#cdd2da;"></div>
<div style="position:absolute;left:1031px;top:410px;width:1px;height:13px;background:#cdd2da;"></div>
<div style="position:absolute;left:1078px;top:410px;width:1px;height:13px;background:#cdd2da;"></div>
<div style="position:absolute;left:1115px;top:410px;width:1px;height:13px;background:#cdd2da;"></div>
<div style="position:absolute;left:49px;top:424px;width:1px;height:13px;background:#cdd2da;"></div>
<div style="position:absolute;left:100px;top:424px;width:1px;height:13px;background:#cdd2da;"></div>
<div style="position:absolute;left:154px;top:424px;width:1px;height:13px;background:#cdd2da;"></div>
<div style="position:absolute;left:257px;top:424px;width:1px;height:13px;background:#cdd2da;"></div>
<div style="position:absolute;left:313px;top:424px;width:1px;height:13px;background:#cdd2da;"></div>
<div style="position:absolute;left:378px;top:424px;width:1px;height:13px;background:#cdd2da;"></div>
<div style="position:absolute;left:431px;top:424px;width:1px;height:13px;background:#cdd2da;"></div>
<div style="position:absolute;left:485px;top:424px;width:1px;height:13px;background:#cdd2da;"></div>
<div style="position:absolute;left:539px;top:424px;width:1px;height:13px;background:#cdd2da;"></div>
<div style="position:absolute;left:613px;top:424px;width:1px;height:13px;background:#cdd2da;"></div>
<div style="position:absolute;left:742px;top:424px;width:1px;height:13px;background:#cdd2da;"></div>
<div style="position:absolute;left:801px;top:424px;width:1px;height:13px;background:#cdd2da;"></div>
<div style="position:absolute;left:841px;top:424px;width:1px;height:13px;background:#cdd2da;"></div>
<div style="position:absolute;left:914px;top:424px;width:1px;height:13px;background:#cdd2da;"></div>
<div style="position:absolute;left:974px;top:424px;width:1px;height:13px;background:#cdd2da;"></div>
<div style="position:absolute;left:1031px;top:424px;width:1px;height:13px;background:#cdd2da;"></div>
<div style="position:absolute;left:1078px;top:424px;width:1px;height:13px;background:#cdd2da;"></div>
<div style="position:absolute;left:1115px;top:424px;width:1px;height:13px;background:#cdd2da;"></div>
<div style="position:absolute;left:49px;top:438px;width:1px;height:13px;background:#cdd2da;"></div>
<div style="position:absolute;left:100px;top:438px;width:1px;height:13px;background:#cdd2da;"></div>
<div style="position:absolute;left:154px;top:438px;width:1px;height:13px;background:#cdd2da;"></div>
<div style="position:absolute;left:257px;top:438px;width:1px;height:13px;background:#cdd2da;"></div>
<div style="position:absolute;left:313px;top:438px;width:1px;height:13px;background:#cdd2da;"></div>
<div style="position:absolute;left:378px;top:438px;width:1px;height:13px;background:#cdd2da;"></div>
<div style="position:absolute;left:431px;top:438px;width:1px;height:13px;background:#cdd2da;"></div>
<div style="position:absolute;left:485px;top:438px;width:1px;height:13px;background:#cdd2da;"></div>
<div style="position:absolute;left:539px;top:438px;width:1px;height:13px;background:#cdd2da;"></div>
<div style="position:absolute;left:613px;top:438px;width:1px;height:13px;background:#cdd2da;"></div>
<div style="position:absolute;left:742px;top:438px;width:1px;height:13px;background:#cdd2da;"></div>
<div style="position:absolute;left:801px;top:438px;width:1px;height:13px;background:#cdd2da;"></div>
<div style="position:absolute;left:841px;top:438px;width:1px;height:13px;background:#cdd2da;"></div>
<div style="position:absolute;left:914px;top:438px;width:1px;height:13px;background:#cdd2da;"></div>
<div style="position:absolute;left:974px;top:438px;width:1px;height:13px;background:#cdd2da;"></div>
<div style="position:absolute;left:1031px;top:438px;width:1px;height:13px;background:#cdd2da;"></div>
<div style="position:absolute;left:1078px;top:438px;width:1px;height:13px;background:#cdd2da;"></div>
<div style="position:absolute;left:1115px;top:438px;width:1px;height:13px;background:#cdd2da;"></div>
<div style="position:absolute;left:49px;top:452px;width:1px;height:13px;background:#cdd2da;"></div>
<div style="position:absolute;left:100px;top:452px;width:1px;height:13px;background:#cdd2da;"></div>
<div style="position:absolute;left:154px;top:452px;width:1px;height:13px;background:#cdd2da;"></div>
<div style="position:absolute;left:257px;top:452px;width:1px;height:13px;background:#cdd2da;"></div>
<div style="position:absolute;left:313px;top:452px;width:1px;height:13px;background:#cdd2da;"></div>
<div style="position:absolute;left:378px;top:452px;width:1px;height:13px;background:#cdd2da;"></div>
<div style="position:absolute;left:431px;top:452px;width:1px;height:13px;background:#cdd2da;"></div>
<div style="position:absolute;left:485px;top:452px;width:1px;height:13px;background:#cdd2da;"></div>
<div style="position:absolute;left:539px;top:452px;width:1px;height:13px;background:#cdd2da;"></div>
<div style="position:absolute;left:613px;top:452px;width:1px;height:13px;background:#cdd2da;"></div>
<div style="position:absolute;left:742px;top:452px;width:1px;height:13px;background:#cdd2da;"></div>
<div style="position:absolute;left:801px;top:452px;width:1px;height:13px;background:#cdd2da;"></div>
<div style="position:absolute;left:841px;top:452px;width:1px;height:13px;background:#cdd2da;"></div>
<div style="position:absolute;left:914px;top:452px;width:1px;height:13px;background:#cdd2da;"></div>
<div style="position:absolute;left:974px;top:452px;width:1px;height:13px;background:#cdd2da;"></div>
<div style="position:absolute;left:1031px;top:452px;width:1px;height:13px;background:#cdd2da;"></div>
<div style="position:absolute;left:1078px;top:452px;width:1px;height:13px;background:#cdd2da;"></div>
<div style="position:absolute;left:1115px;top:452px;width:1px;height:13px;background:#cdd2da;"></div>
<div style="position:absolute;left:49px;top:466px;width:1px;height:13px;background:#cdd2da;"></div>
<div style="position:absolute;left:100px;top:466px;width:1px;height:13px;background:#cdd2da;"></div>
<div style="position:absolute;left:154px;top:466px;width:1px;height:13px;background:#cdd2da;"></div>
<div style="position:absolute;left:257px;top:466px;width:1px;height:13px;background:#cdd2da;"></div>
<div style="position:absolute;left:313px;top:466px;width:1px;height:13px;background:#cdd2da;"></div>
<div style="position:absolute;left:378px;top:466px;width:1px;height:13px;background:#cdd2da;"></div>
<div style="position:absolute;left:431px;top:466px;width:1px;height:13px;background:#cdd2da;"></div>
<div style="position:absolute;left:485px;top:466px;width:1px;height:13px;background:#cdd2da;"></div>
<div style="position:absolute;left:539px;top:466px;width:1px;height:13px;background:#cdd2da;"></div>
<div style="position:absolute;left:613px;top:466px;width:1px;height:13px;background:#cdd2da;"></div>
<div style="position:absolute;left:742px;top:466px;width:1px;height:13px;background:#cdd2da;"></div>
<div style="position:absolute;left:801px;top:466px;width:1px;height:13px;background:#cdd2da;"></div>
<div style="position:absolute;left:841px;top:466px;width:1px;height:13px;background:#cdd2da;"></div>
<div style="position:absolute;left:914px;top:466px;width:1px;height:13px;background:#cdd2da;"></div>
<div style="position:absolute;left:974px;top:466px;width:1px;height:13px;background:#cdd2da;"></div>
<div style="position:absolute;left:1031px;top:466px;width:1px;height:13px;background:#cdd2da;"></div>
<div style="position:absolute;left:1078px;top:466px;width:1px;height:13px;background:#cdd2da;"></div>
<div style="position:absolute;left:1115px;top:466px;width:1px;height:13px;background:#cdd2da;"></div>
<div style="position:absolute;left:49px;top:480px;width:1px;height:13px;background:#cdd2da;"></div>
<div style="position:absolute;left:100px;top:480px;width:1px;height:13px;background:#cdd2da;"></div>
<div style="position:absolute;left:154px;top:480px;width:1px;height:13px;background:#cdd2da;"></div>
<div style="position:absolute;left:257px;top:480px;width:1px;height:13px;background:#cdd2da;"></div>
<div style="position:absolute;left:313px;top:480px;width:1px;height:13px;background:#cdd2da;"></div>
<div style="position:absolute;left:378px;top:480px;width:1px;height:13px;background:#cdd2da;"></div>
<div style="position:absolute;left:431px;top:480px;width:1px;height:13px;background:#cdd2da;"></div>
<div style="position:absolute;left:485px;top:480px;width:1px;height:13px;background:#cdd2da;"></div>
<div style="position:absolute;left:539px;top:480px;width:1px;height:13px;background:#cdd2da;"></div>
<div style="position:absolute;left:613px;top:480px;width:1px;height:13px;background:#cdd2da;"></div>
<div style="position:absolute;left:742px;top:480px;width:1px;height:13px;background:#cdd2da;"></div>
<div style="position:absolute;left:801px;top:480px;width:1px;height:13px;background:#cdd2da;"></div>
<div style="position:absolute;left:841px;top:480px;width:1px;height:13px;background:#cdd2da;"></div>
<div style="position:absolute;left:914px;top:480px;width:1px;height:13px;background:#cdd2da;"></div>
<div style="position:absolute;left:974px;top:480px;width:1px;height:13px;background:#cdd2da;"></div>
<div style="position:absolute;left:1031px;top:480px;width:1px;height:13px;background:#cdd2da;"></div>
<div style="position:absolute;left:1078px;top:480px;width:1px;height:13px;background:#cdd2da;"></div>
<div style="position:absolute;left:1115px;top:480px;width:1px;height:13px;background:#cdd2da;"></div>
<div style="position:absolute;left:49px;top:494px;width:1px;height:13px;background:#cdd2da;"></div>
<div style="position:absolute;left:100px;top:494px;width:1px;height:13px;background:#cdd2da;"></div>
<div style="position:absolute;left:154px;top:494px;width:1px;height:13px;background:#cdd2da;"></div>
<div style="position:absolute;left:257px;top:494px;width:1px;height:13px;background:#cdd2da;"></div>
<div style="position:absolute;left:313px;top:494px;width:1px;height:13px;background:#cdd2da;"></div>
<div style="position:absolute;left:378px;top:494px;width:1px;height:13px;background:#cdd2da;"></div>
<div style="position:absolute;left:431px;top:494px;width:1px;height:13px;background:#cdd2da;"></div>
<div style="position:absolute;left:485px;top:494px;width:1px;height:13px;background:#cdd2da;"></div>
<div style="position:absolute;left:539px;top:494px;width:1px;height:13px;background:#cdd2da;"></div>
<div style="position:absolute;left:613px;top:494px;width:1px;height:13px;background:#cdd2da;"></div>
<div style="position:absolute;left:742px;top:494px;width:1px;height:13px;background:#cdd2da;"></div>
<div style="position:absolute;left:801px;top:494px;width:1px;height:13px;background:#cdd2da;"></div>
<div style="position:absolute;left:841px;top:494px;width:1px;height:13px;background:#cdd2da;"></div>
<div style="position:absolute;left:914px;top:494px;width:1px;height:13px;background:#cdd2da;"></div>
<div style="position:absolute;left:974px;top:494px;width:1px;height:13px;background:#cdd2da;"></div>
<div style="position:absolute;left:1031px;top:494px;width:1px;height:13px;background:#cdd2da;"></div>
<div style="position:absolute;left:1078px;top:494px;width:1px;height:13px;background:#cdd2da;"></div>
<div style="position:absolute;left:1115px;top:494px;width:1px;height:13px;background:#cdd2da;"></div>
<div style="position:absolute;left:49px;top:508px;width:1px;height:13px;background:#cdd2da;"></div>
<div style="position:absolute;left:100px;top:508px;width:1px;height:13px;background:#cdd2da;"></div>
<div style="position:absolute;left:154px;top:508px;width:1px;height:13px;background:#cdd2da;"></div>
<div style="position:absolute;left:257px;top:508px;width:1px;height:13px;background:#cdd2da;"></div>
<div style="position:absolute;left:313px;top:508px;width:1px;height:13px;background:#cdd2da;"></div>
<div style="position:absolute;left:378px;top:508px;width:1px;height:13px;background:#cdd2da;"></div>
<div style="position:absolute;left:431px;top:508px;width:1px;height:13px;background:#cdd2da;"></div>
<div style="position:absolute;left:485px;top:508px;width:1px;height:13px;background:#cdd2da;"></div>
<div style="position:absolute;left:539px;top:508px;width:1px;height:13px;background:#cdd2da;"></div>
<div style="position:absolute;left:613px;top:508px;width:1px;height:13px;background:#cdd2da;"></div>
<div style="position:absolute;left:742px;top:508px;width:1px;height:13px;background:#cdd2da;"></div>
<div style="position:absolute;left:801px;top:508px;width:1px;height:13px;background:#cdd2da;"></div>
<div style="position:absolute;left:841px;top:508px;width:1px;height:13px;background:#cdd2da;"></div>
<div style="position:absolute;left:914px;top:508px;width:1px;height:13px;background:#cdd2da;"></div>
<div style="position:absolute;left:974px;top:508px;width:1px;height:13px;background:#cdd2da;"></div>
<div style="position:absolute;left:1031px;top:508px;width:1px;height:13px;background:#cdd2da;"></div>
<div style="position:absolute;left:1078px;top:508px;width:1px;height:13px;background:#cdd2da;"></div>
<div style="position:absolute;left:1115px;top:508px;width:1px;height:13px;background:#cdd2da;"></div>
<div style="position:absolute;left:49px;top:522px;width:1px;height:13px;background:#cdd2da;"></div>
<div style="position:absolute;left:100px;top:522px;width:1px;height:13px;background:#cdd2da;"></div>
<div style="position:absolute;left:154px;top:522px;width:1px;height:13px;background:#cdd2da;"></div>
<div style="position:absolute;left:257px;top:522px;width:1px;height:13px;background:#cdd2da;"></div>
<div style="position:absolute;left:313px;top:522px;width:1px;height:13px;background:#cdd2da;"></div>
<div style="position:absolute;left:378px;top:522px;width:1px;height:13px;background:#cdd2da;"></div>
<div style="position:absolute;left:431px;top:522px;width:1px;height:13px;background:#cdd2da;"></div>
<div style="position:absolute;left:485px;top:522px;width:1px;height:13px;background:#cdd2da;"></div>
<div style="position:absolute;left:539px;top:522px;width:1px;height:13px;background:#cdd2da;"></div>
<div style="position:absolute;left:613px;top:522px;width:1px;height:13px;background:#cdd2da;"></div>
<div style="position:absolute;left:742px;top:522px;width:1px;height:13px;background:#cdd2da;"></div>
<div style="position:absolute;left:801px;top:522px;width:1px;height:13px;background:#cdd2da;"></div>
<div style="position:absolute;left:841px;top:522px;width:1px;height:13px;background:#cdd2da;"></div>
<div style="position:absolute;left:914px;top:522px;width:1px;height:13px;background:#cdd2da;"></div>
<div style="position:absolute;left:974px;top:522px;width:1px;height:13px;background:#cdd2da;"></div>
<div style="position:absolute;left:1031px;top:522px;width:1px;height:13px;background:#cdd2da;"></div>
<div style="position:absolute;left:1078px;top:522px;width:1px;height:13px;background:#cdd2da;"></div>
<div style="position:absolute;left:1115px;top:522px;width:1px;height:13px;background:#cdd2da;"></div>
<div style="position:absolute;left:49px;top:536px;width:1px;height:13px;background:#cdd2da;"></div>
<div style="position:absolute;left:100px;top:536px;width:1px;height:13px;background:#cdd2da;"></div>
<div style="position:absolute;left:154px;top:536px;width:1px;height:13px;background:#cdd2da;"></div>
<div style="position:absolute;left:257px;top:536px;width:1px;height:13px;background:#cdd2da;"></div>
<div style="position:absolute;left:313px;top:536px;width:1px;height:13px;background:#cdd2da;"></div>
<div style="position:absolute;left:378px;top:536px;width:1px;height:13px;background:#cdd2da;"></div>
<div style="position:absolute;left:431px;top:536px;width:1px;height:13px;background:#cdd2da;"></div>
<div style="position:absolute;left:485px;top:536px;width:1px;height:13px;background:#cdd2da;"></div>
<div style="position:absolute;left:539px;top:536px;width:1px;height:13px;background:#cdd2da;"></div>
<div style="position:absolute;left:613px;top:536px;width:1px;height:13px;background:#cdd2da;"></div>
<div style="position:absolute;left:742px;top:536px;width:1px;height:13px;background:#cdd2da;"></div>
<div style="position:absolute;left:801px;top:536px;width:1px;height:13px;background:#cdd2da;"></div>
<div style="position:absolute;left:841px;top:536px;width:1px;height:13px;background:#cdd2da;"></div>
<div style="position:absolute;left:914px;top:536px;width:1px;height:13px;background:#cdd2da;"></div>
<div style="position:absolute;left:974px;top:536px;width:1px;height:13px;background:#cdd2da;"></div>
<div style="position:absolute;left:1031px;top:536px;width:1px;height:13px;background:#cdd2da;"></div>
<div style="position:absolute;left:1078px;top:536px;width:1px;height:13px;background:#cdd2da;"></div>
<div style="position:absolute;left:1115px;top:536px;width:1px;height:13px;background:#cdd2da;"></div>
<div style="position:absolute;left:49px;top:550px;width:1px;height:13px;background:#cdd2da;"></div>
<div style="position:absolute;left:100px;top:550px;width:1px;height:13px;background:#cdd2da;"></div>
<div style="position:absolute;left:154px;top:550px;width:1px;height:13px;background:#cdd2da;"></div>
<div style="position:absolute;left:257px;top:550px;width:1px;height:13px;background:#cdd2da;"></div>
<div style="position:absolute;left:313px;top:550px;width:1px;height:13px;background:#cdd2da;"></div>
<div style="position:absolute;left:378px;top:550px;width:1px;height:13px;background:#cdd2da;"></div>
<div style="position:absolute;left:431px;top:550px;width:1px;height:13px;background:#cdd2da;"></div>
<div style="position:absolute;left:485px;top:550px;width:1px;height:13px;background:#cdd2da;"></div>
<div style="position:absolute;left:539px;top:550px;width:1px;height:13px;background:#cdd2da;"></div>
<div style="position:absolute;left:613px;top:550px;width:1px;height:13px;background:#cdd2da;"></div>
<div style="position:absolute;left:742px;top:550px;width:1px;height:13px;background:#cdd2da;"></div>
<div style="position:absolute;left:801px;top:550px;width:1px;height:13px;background:#cdd2da;"></div>
<div style="position:absolute;left:841px;top:550px;width:1px;height:13px;background:#cdd2da;"></div>
<div style="position:absolute;left:914px;top:550px;width:1px;height:13px;background:#cdd2da;"></div>
<div style="position:absolute;left:974px;top:550px;width:1px;height:13px;background:#cdd2da;"></div>
<div style="position:absolute;left:1031px;top:550px;width:1px;height:13px;background:#cdd2da;"></div>
<div style="position:absolute;left:1078px;top:550px;width:1px;height:13px;background:#cdd2da;"></div>
<div style="position:absolute;left:1115px;top:550px;width:1px;height:13px;background:#cdd2da;"></div>
<div style="position:absolute;left:49px;top:564px;width:1px;height:13px;background:#cdd2da;"></div>
<div style="position:absolute;left:100px;top:564px;width:1px;height:13px;background:#cdd2da;"></div>
<div style="position:absolute;left:154px;top:564px;width:1px;height:13px;background:#cdd2da;"></div>
<div style="position:absolute;left:257px;top:564px;width:1px;height:13px;background:#cdd2da;"></div>
<div style="position:absolute;left:313px;top:564px;width:1px;height:13px;background:#cdd2da;"></div>
<div style="position:absolute;left:378px;top:564px;width:1px;height:13px;background:#cdd2da;"></div>
<div style="position:absolute;left:431px;top:564px;width:1px;height:13px;background:#cdd2da;"></div>
<div style="position:absolute;left:485px;top:564px;width:1px;height:13px;background:#cdd2da;"></div>
<div style="position:absolute;left:539px;top:564px;width:1px;height:13px;background:#cdd2da;"></div>
<div style="position:absolute;left:613px;top:564px;width:1px;height:13px;background:#cdd2da;"></div>
<div style="position:absolute;left:742px;top:564px;width:1px;height:13px;background:#cdd2da;"></div>
<div style="position:absolute;left:801px;top:564px;width:1px;height:13px;background:#cdd2da;"></div>
<div style="position:absolute;left:841px;top:564px;width:1px;height:13px;background:#cdd2da;"></div>
<div style="position:absolute;left:914px;top:564px;width:1px;height:13px;background:#cdd2da;"></div>
<div style="position:absolute;left:974px;top:564px;width:1px;height:13px;background:#cdd2da;"></div>
<div style="position:absolute;left:1031px;top:564px;width:1px;height:13px;background:#cdd2da;"></div>
<div style="position:absolute;left:1078px;top:564px;width:1px;height:13px;background:#cdd2da;"></div>
<div style="position:absolute;left:1115px;top:564px;width:1px;height:13px;background:#cdd2da;"></div>
<div style="position:absolute;left:49px;top:578px;width:1px;height:13px;background:#cdd2da;"></div>
<div style="position:absolute;left:100px;top:578px;width:1px;height:13px;background:#cdd2da;"></div>
<div style="position:absolute;left:154px;top:578px;width:1px;height:13px;background:#cdd2da;"></div>
<div style="position:absolute;left:257px;top:578px;width:1px;height:13px;background:#cdd2da;"></div>
<div style="position:absolute;left:313px;top:578px;width:1px;height:13px;background:#cdd2da;"></div>
<div style="position:absolute;left:378px;top:578px;width:1px;height:13px;background:#cdd2da;"></div>
<div style="position:absolute;left:431px;top:578px;width:1px;height:13px;background:#cdd2da;"></div>
<div style="position:absolute;left:485px;top:578px;width:1px;height:13px;background:#cdd2da;"></div>
<div style="position:absolute;left:539px;top:578px;width:1px;height:13px;background:#cdd2da;"></div>
<div style="position:absolute;left:613px;top:578px;width:1px;height:13px;background:#cdd2da;"></div>
<div style="position:absolute;left:742px;top:578px;width:1px;height:13px;background:#cdd2da;"></div>
<div style="position:absolute;left:801px;top:578px;width:1px;height:13px;background:#cdd2da;"></div>
<div style="position:absolute;left:841px;top:578px;width:1px;height:13px;background:#cdd2da;"></div>
<div style="position:absolute;left:914px;top:578px;width:1px;height:13px;background:#cdd2da;"></div>
<div style="position:absolute;left:974px;top:578px;width:1px;height:13px;background:#cdd2da;"></div>
<div style="position:absolute;left:1031px;top:578px;width:1px;height:13px;background:#cdd2da;"></div>
<div style="position:absolute;left:1078px;top:578px;width:1px;height:13px;background:#cdd2da;"></div>
<div style="position:absolute;left:1115px;top:578px;width:1px;height:13px;background:#cdd2da;"></div>
<div style="position:absolute;left:49px;top:592px;width:1px;height:13px;background:#cdd2da;"></div>
<div style="position:absolute;left:100px;top:592px;width:1px;height:13px;background:#cdd2da;"></div>
<div style="position:absolute;left:154px;top:592px;width:1px;height:13px;background:#cdd2da;"></div>
<div style="position:absolute;left:257px;top:592px;width:1px;height:13px;background:#cdd2da;"></div>
<div style="position:absolute;left:313px;top:592px;width:1px;height:13px;background:#cdd2da;"></div>
<div style="position:absolute;left:378px;top:592px;width:1px;height:13px;background:#cdd2da;"></div>
<div style="position:absolute;left:431px;top:592px;width:1px;height:13px;background:#cdd2da;"></div>
<div style="position:absolute;left:485px;top:592px;width:1px;height:13px;background:#cdd2da;"></div>
<div style="position:absolute;left:539px;top:592px;width:1px;height:13px;background:#cdd2da;"></div>
<div style="position:absolute;left:613px;top:592px;width:1px;height:13px;background:#cdd2da;"></div>
<div style="position:absolute;left:742px;top:592px;width:1px;height:13px;background:#cdd2da;"></div>
<div style="position:absolute;left:801px;top:592px;width:1px;height:13px;background:#cdd2da;"></div>
<div style="position:absolute;left:841px;top:592px;width:1px;height:13px;background:#cdd2da;"></div>
<div style="position:absolute;left:914px;top:592px;width:1px;height:13px;background:#cdd2da;"></div>
<div style="position:absolute;left:974px;top:592px;width:1px;height:13px;background:#cdd2da;"></div>
<div style="position:absolute;left:1031px;top:592px;width:1px;height:13px;background:#cdd2da;"></div>
<div style="position:absolute;left:1078px;top:592px;width:1px;height:13px;background:#cdd2da;"></div>
<div style="position:absolute;left:1115px;top:592px;width:1px;height:13px;background:#cdd2da;"></div>
<div style="position:absolute;left:49px;top:606px;width:1px;height:13px;background:#cdd2da;"></div>
<div style="position:absolute;left:100px;top:606px;width:1px;height:13px;background:#cdd2da;"></div>
<div style="position:absolute;left:154px;top:606px;width:1px;height:13px;background:#cdd2da;"></div>
<div style="position:absolute;left:257px;top:606px;width:1px;height:13px;background:#cdd2da;"></div>
<div style="position:absolute;left:313px;top:606px;width:1px;height:13px;background:#cdd2da;"></div>
<div style="position:absolute;left:378px;top:606px;width:1px;height:13px;background:#cdd2da;"></div>
<div style="position:absolute;left:431px;top:606px;width:1px;height:13px;background:#cdd2da;"></div>
<div style="position:absolute;left:485px;top:606px;width:1px;height:13px;background:#cdd2da;"></div>
<div style="position:absolute;left:539px;top:606px;width:1px;height:13px;background:#cdd2da;"></div>
<div style="position:absolute;left:613px;top:606px;width:1px;height:13px;background:#cdd2da;"></div>
<div style="position:absolute;left:742px;top:606px;width:1px;height:13px;background:#cdd2da;"></div>
<div style="position:absolute;left:801px;top:606px;width:1px;height:13px;background:#cdd2da;"></div>
<div style="position:absolute;left:841px;top:606px;width:1px;height:13px;background:#cdd2da;"></div>
<div style="position:absolute;left:914px;top:606px;width:1px;height:13px;background:#cdd2da;"></div>
<div style="position:absolute;left:974px;top:606px;width:1px;height:13px;background:#cdd2da;"></div>
<div style="position:absolute;left:1031px;top:606px;width:1px;height:13px;background:#cdd2da;"></div>
<div style="position:absolute;left:1078px;top:606px;width:1px;height:13px;background:#cdd2da;"></div>
<div style="position:absolute;left:1115px;top:606px;width:1px;height:13px;background:#cdd2da;"></div>
<div style="position:absolute;left:49px;top:620px;width:1px;height:13px;background:#cdd2da;"></div>
<div style="position:absolute;left:100px;top:620px;width:1px;height:13px;background:#cdd2da;"></div>
<div style="position:absolute;left:154px;top:620px;width:1px;height:13px;background:#cdd2da;"></div>
<div style="position:absolute;left:257px;top:620px;width:1px;height:13px;background:#cdd2da;"></div>
<div style="position:absolute;left:313px;top:620px;width:1px;height:13px;background:#cdd2da;"></div>
<div style="position:absolute;left:378px;top:620px;width:1px;height:13px;background:#cdd2da;"></div>
<div style="position:absolute;left:431px;top:620px;width:1px;height:13px;background:#cdd2da;"></div>
<div style="position:absolute;left:485px;top:620px;width:1px;height:13px;background:#cdd2da;"></div>
<div style="position:absolute;left:539px;top:620px;width:1px;height:13px;background:#cdd2da;"></div>
<div style="position:absolute;left:613px;top:620px;width:1px;height:13px;background:#cdd2da;"></div>
<div style="position:absolute;left:742px;top:620px;width:1px;height:13px;background:#cdd2da;"></div>
<div style="position:absolute;left:801px;top:620px;width:1px;height:13px;background:#cdd2da;"></div>
<div style="position:absolute;left:841px;top:620px;width:1px;height:13px;background:#cdd2da;"></div>
<div style="position:absolute;left:914px;top:620px;width:1px;height:13px;background:#cdd2da;"></div>
<div style="position:absolute;left:974px;top:620px;width:1px;height:13px;background:#cdd2da;"></div>
<div style="position:absolute;left:1031px;top:620px;width:1px;height:13px;background:#cdd2da;"></div>
<div style="position:absolute;left:1078px;top:620px;width:1px;height:13px;background:#cdd2da;"></div>
<div style="position:absolute;left:1115px;top:620px;width:1px;height:13px;background:#cdd2da;"></div>
<div style="position:absolute;left:539px;top:84px;width:75px;height:15px;background:#92d050;"></div>
<div style="position:absolute;left:613px;top:84px;width:130px;height:15px;background:#92d050;"></div>
<div style="position:absolute;left:742px;top:84px;width:60px;height:15px;background:#92d050;"></div>
<div style="position:absolute;left:801px;top:84px;width:41px;height:15px;background:#92d050;"></div>
<div style="position:absolute;left:841px;top:84px;width:74px;height:15px;background:#92d050;"></div>
<div style="position:absolute;left:154px;top:308px;width:104px;height:15px;background:#ffc000;"></div>
<div style="position:absolute;left:257px;top:308px;width:57px;height:15px;background:#ffc000;"></div>
<div style="position:absolute;left:313px;top:308px;width:66px;height:15px;background:#ffc000;"></div>
<div style="position:absolute;left:378px;top:308px;width:54px;height:15px;background:#ffc000;"></div>
<div style="position:absolute;left:431px;top:308px;width:55px;height:15px;background:#ffc000;"></div>
<div style="position:absolute;left:485px;top:308px;width:55px;height:15px;background:#ffc000;"></div>
<div style="position:absolute;left:539px;top:308px;width:75px;height:15px;background:#ffc000;"></div>
<div style="position:absolute;left:613px;top:308px;width:130px;height:15px;background:#ffc000;"></div>
<div style="position:absolute;left:742px;top:308px;width:60px;height:15px;background:#ffc000;"></div>
<div style="position:absolute;left:801px;top:308px;width:41px;height:15px;background:#ffc000;"></div>
<div style="position:absolute;left:841px;top:308px;width:74px;height:15px;background:#ffc000;"></div>
<div style="position:absolute;left:914px;top:308px;width:61px;height:15px;background:#ffc000;"></div>
<div style="position:absolute;left:974px;top:308px;width:58px;height:15px;background:#ffc000;"></div>
<div style="position:absolute;left:1031px;top:308px;width:48px;height:15px;background:#ffc000;"></div>
<div style="position:absolute;left:1078px;top:308px;width:38px;height:15px;background:#ffc000;"></div>
<div style="position:absolute;left:1115px;top:308px;width:67px;height:15px;background:#ffc000;"></div>
<div style="position:absolute;left:154px;top:322px;width:104px;height:15px;background:#ffc000;"></div>
<div style="position:absolute;left:257px;top:322px;width:57px;height:15px;background:#ffc000;"></div>
<div style="position:absolute;left:313px;top:322px;width:66px;height:15px;background:#ffc000;"></div>
<div style="position:absolute;left:378px;top:322px;width:54px;height:15px;background:#ffc000;"></div>
<div style="position:absolute;left:431px;top:322px;width:55px;height:15px;background:#ffc000;"></div>
<div style="position:absolute;left:485px;top:322px;width:55px;height:15px;background:#ffc000;"></div>
<div style="position:absolute;left:539px;top:322px;width:75px;height:15px;background:#ffc000;"></div>
<div style="position:absolute;left:613px;top:322px;width:130px;height:15px;background:#ffc000;"></div>
<div style="position:absolute;left:742px;top:322px;width:60px;height:15px;background:#ffc000;"></div>
<div style="position:absolute;left:801px;top:322px;width:41px;height:15px;background:#ffc000;"></div>
<div style="position:absolute;left:841px;top:322px;width:74px;height:15px;background:#ffc000;"></div>
<div style="position:absolute;left:914px;top:322px;width:61px;height:15px;background:#ffc000;"></div>
<div style="position:absolute;left:974px;top:322px;width:58px;height:15px;background:#ffc000;"></div>
<div style="position:absolute;left:1031px;top:322px;width:48px;height:15px;background:#ffc000;"></div>
<div style="position:absolute;left:1078px;top:322px;width:38px;height:15px;background:#ffc000;"></div>
<div style="position:absolute;left:1115px;top:322px;width:67px;height:15px;background:#ffc000;"></div>
<div style="position:absolute;left:49px;top:378px;width:52px;height:18px;background:#92d050;"></div>
<div style="position:absolute;left:100px;top:378px;width:55px;height:18px;background:#ffc000;"></div>
<div style="position:absolute;left:257px;top:378px;width:57px;height:18px;background:#ffc000;"></div>
<div style="position:absolute;left:485px;top:378px;width:55px;height:18px;background:#ffc000;"></div>
<div style="position:absolute;left:974px;top:378px;width:58px;height:18px;background:#ffc000;"></div>
<div style="position:absolute;left:1031px;top:378px;width:48px;height:18px;background:#ffc000;"></div>
<div style="position:absolute;left:1078px;top:378px;width:38px;height:18px;background:#ffc000;"></div>
<div style="position:absolute;left:257px;top:395px;width:57px;height:15px;background:#ffc000;"></div>
<div style="position:absolute;left:485px;top:395px;width:55px;height:15px;background:#ffc000;"></div>
<div style="position:absolute;left:974px;top:395px;width:58px;height:15px;background:#ffc000;"></div>
<div style="position:absolute;left:1031px;top:395px;width:48px;height:15px;background:#ffc000;"></div>
<div style="position:absolute;left:1078px;top:395px;width:38px;height:15px;background:#ffc000;"></div>
<div style="position:absolute;left:20px;top:437px;width:30px;height:15px;background:#bccadd;"></div>
<div style="position:absolute;left:49px;top:437px;width:52px;height:15px;background:#92d050;"></div>
<div style="position:absolute;left:100px;top:437px;width:55px;height:15px;background:#ffc000;"></div>
<div style="position:absolute;left:257px;top:437px;width:57px;height:15px;background:#ffc000;"></div>
<div style="position:absolute;left:485px;top:437px;width:55px;height:15px;background:#ffc000;"></div>
<div style="position:absolute;left:974px;top:437px;width:58px;height:15px;background:#ffc000;"></div>
<div style="position:absolute;left:1031px;top:437px;width:48px;height:15px;background:#ffc000;"></div>
<div style="position:absolute;left:1078px;top:437px;width:38px;height:15px;background:#ffc000;"></div>
<div style="position:absolute;left:257px;top:451px;width:57px;height:15px;background:#ffc000;"></div>
<div style="position:absolute;left:485px;top:451px;width:55px;height:15px;background:#ffc000;"></div>
<div style="position:absolute;left:974px;top:451px;width:58px;height:15px;background:#ffc000;"></div>
<div style="position:absolute;left:1031px;top:451px;width:48px;height:15px;background:#ffc000;"></div>
<div style="position:absolute;left:1078px;top:451px;width:38px;height:15px;background:#ffc000;"></div>
<div style="position:absolute;left:20px;top:493px;width:30px;height:15px;background:#bccadd;"></div>
<div style="position:absolute;left:100px;top:493px;width:55px;height:15px;background:#ffc000;"></div>
<div style="position:absolute;left:257px;top:493px;width:57px;height:15px;background:#ffc000;"></div>
<div style="position:absolute;left:485px;top:493px;width:55px;height:15px;background:#ffc000;"></div>
<div style="position:absolute;left:974px;top:493px;width:58px;height:15px;background:#ffc000;"></div>
<div style="position:absolute;left:1031px;top:493px;width:48px;height:15px;background:#ffc000;"></div>
<div style="position:absolute;left:1078px;top:493px;width:38px;height:15px;background:#ffc000;"></div>
<div style="position:absolute;left:257px;top:507px;width:57px;height:15px;background:#ffc000;"></div>
<div style="position:absolute;left:485px;top:507px;width:55px;height:15px;background:#ffc000;"></div>
<div style="position:absolute;left:974px;top:507px;width:58px;height:15px;background:#ffc000;"></div>
<div style="position:absolute;left:1031px;top:507px;width:48px;height:15px;background:#ffc000;"></div>
<div style="position:absolute;left:1078px;top:507px;width:38px;height:15px;background:#ffc000;"></div>
<div style="position:absolute;left:20px;top:549px;width:30px;height:15px;background:#bccadd;"></div>
<div style="position:absolute;left:100px;top:549px;width:55px;height:15px;background:#ffc000;"></div>
<div style="position:absolute;left:257px;top:549px;width:57px;height:15px;background:#ffc000;"></div>
<div style="position:absolute;left:485px;top:549px;width:55px;height:15px;background:#ffc000;"></div>
<div style="position:absolute;left:974px;top:549px;width:58px;height:15px;background:#ffc000;"></div>
<div style="position:absolute;left:1031px;top:549px;width:48px;height:15px;background:#ffc000;"></div>
<div style="position:absolute;left:1078px;top:549px;width:38px;height:15px;background:#ffc000;"></div>
<div style="position:absolute;left:257px;top:563px;width:57px;height:15px;background:#ffc000;"></div>
<div style="position:absolute;left:485px;top:563px;width:55px;height:15px;background:#ffc000;"></div>
<div style="position:absolute;left:974px;top:563px;width:58px;height:15px;background:#ffc000;"></div>
<div style="position:absolute;left:1031px;top:563px;width:48px;height:15px;background:#ffc000;"></div>
<div style="position:absolute;left:1078px;top:563px;width:38px;height:15px;background:#ffc000;"></div>
<div style="position:absolute;left:20px;top:605px;width:30px;height:15px;background:#bccadd;"></div>
<div style="position:absolute;left:49px;top:605px;width:52px;height:15px;background:#92d050;"></div>
<div style="position:absolute;left:100px;top:605px;width:55px;height:15px;background:#ffc000;"></div>
<div style="position:absolute;left:257px;top:605px;width:57px;height:15px;background:#ffc000;"></div>
<div style="position:absolute;left:485px;top:605px;width:55px;height:15px;background:#ffc000;"></div>
<div style="position:absolute;left:974px;top:605px;width:58px;height:15px;background:#ffc000;"></div>
<div style="position:absolute;left:1031px;top:605px;width:48px;height:15px;background:#ffc000;"></div>
<div style="position:absolute;left:1078px;top:605px;width:38px;height:15px;background:#ffc000;"></div>
<div style="position:absolute;left:257px;top:619px;width:57px;height:15px;background:#ffc000;"></div>
<div style="position:absolute;left:485px;top:619px;width:55px;height:15px;background:#ffc000;"></div>
<div style="position:absolute;left:974px;top:619px;width:58px;height:15px;background:#ffc000;"></div>
<div style="position:absolute;left:1031px;top:619px;width:48px;height:15px;background:#ffc000;"></div>
<div style="position:absolute;left:1078px;top:619px;width:38px;height:15px;background:#ffc000;"></div>
<div style="position:absolute;left:52px;top:85px;font-size:11px;color:#000;white-space:nowrap;line-height:14px;">Depotstand</div>
<div style="position:absolute;left:58.5px;top:85px;width:253px;text-align:right;font-size:11px;line-height:14px;white-space:nowrap;">10300,00</div>
<div style="position:absolute;left:255.7px;top:85px;width:300px;text-align:center;font-size:11px;line-height:14px;white-space:nowrap;">Depoteinsatz in %</div>
<div style="position:absolute;left:488px;top:85px;font-size:11px;color:#000;white-space:nowrap;line-height:14px;">1</div>
<div style="position:absolute;left:542px;top:85px;font-size:11px;color:#000;white-space:nowrap;line-height:14px;">Verpasst</div>
<div style="position:absolute;left:542px;top:99px;font-size:11px;color:#000;white-space:nowrap;line-height:14px;">M</div>
<div style="position:absolute;left:616px;top:99px;font-size:11px;color:#000;white-space:nowrap;line-height:14px;">Henkel</div>
<div style="position:absolute;left:745px;top:99px;font-size:11px;color:#000;white-space:nowrap;line-height:14px;">Pos.</div>
<div style="position:absolute;left:52px;top:113px;font-size:11px;color:#000;white-space:nowrap;line-height:14px;">Lots</div>
<div style="position:absolute;left:179px;top:113px;font-size:11px;color:#000;white-space:nowrap;line-height:14px;">100000000</div>
<div style="position:absolute;left:542px;top:113px;font-size:11px;color:#000;white-space:nowrap;line-height:14px;">E</div>
<div style="position:absolute;left:414.5px;top:113px;width:326px;text-align:right;font-size:11px;line-height:14px;white-space:nowrap;">32,37</div>
<div style="position:absolute;left:745px;top:113px;font-size:11px;color:#000;white-space:nowrap;line-height:14px;">CRV</div>
<div style="position:absolute;left:642.5px;top:113px;width:270px;text-align:right;font-size:11px;line-height:14px;white-space:nowrap;">2,73</div>
<div style="position:absolute;left:52px;top:127px;font-size:11px;color:#000;white-space:nowrap;line-height:14px;">Pipwert bei …Lots</div>
<div style="position:absolute;left:136.2px;top:127px;width:300px;text-align:center;font-size:11px;line-height:14px;white-space:nowrap;">6741</div>
<div style="position:absolute;left:196.7px;top:127px;width:300px;text-align:center;font-size:11px;line-height:14px;white-space:nowrap;">0,6741</div>
<div style="position:absolute;left:542px;top:127px;font-size:11px;color:#000;white-space:nowrap;line-height:14px;">SL</div>
<div style="position:absolute;left:414.5px;top:127px;width:326px;text-align:right;font-size:11px;line-height:14px;white-space:nowrap;">31,7</div>
<div style="position:absolute;left:745px;top:127px;font-size:11px;color:#000;white-space:nowrap;line-height:14px;">CRV/TA</div>
<div style="position:absolute;left:642.5px;top:127px;width:270px;text-align:right;font-size:11px;line-height:14px;white-space:nowrap;">2,05</div>
<div style="position:absolute;left:52px;top:141px;font-size:11px;color:#000;white-space:nowrap;line-height:14px;">Stoppabstand</div>
<div style="position:absolute;left:136.2px;top:141px;width:300px;text-align:center;font-size:11px;line-height:14px;white-space:nowrap;">175</div>
<div style="position:absolute;left:542px;top:141px;font-size:11px;color:#000;white-space:nowrap;line-height:14px;">TP</div>
<div style="position:absolute;left:414.5px;top:141px;width:326px;text-align:right;font-size:11px;line-height:14px;white-space:nowrap;">34,2000</div>
<div style="position:absolute;left:745px;top:141px;font-size:11px;color:#000;white-space:nowrap;line-height:14px;">TA</div>
<div style="position:absolute;left:642.5px;top:141px;width:270px;text-align:right;font-size:11px;line-height:14px;white-space:nowrap;">33,285</div>
<div style="position:absolute;left:52px;top:155px;font-size:11px;color:#000;white-space:nowrap;line-height:14px;">Depotstand</div>
<div style="position:absolute;left:136.2px;top:155px;width:300px;text-align:center;font-size:11px;line-height:14px;white-space:nowrap;">10300,00</div>
<div style="position:absolute;left:542px;top:155px;font-size:11px;color:#000;white-space:nowrap;line-height:14px;">G</div>
<div style="position:absolute;left:616px;top:155px;font-size:11px;color:#000;white-space:nowrap;line-height:14px;">3. Kontrakt TL</div>
<div style="position:absolute;left:52px;top:169px;font-size:11px;color:#000;white-space:nowrap;line-height:14px;">Risk</div>
<div style="position:absolute;left:136.2px;top:169px;width:300px;text-align:center;font-size:11px;line-height:14px;white-space:nowrap;">0,01</div>
<div style="position:absolute;left:196.7px;top:169px;width:300px;text-align:center;font-size:11px;line-height:14px;white-space:nowrap;">103</div>
<div style="position:absolute;left:542px;top:169px;font-size:11px;color:#000;white-space:nowrap;line-height:14px;">D1</div>
<div style="position:absolute;left:414.5px;top:169px;width:326px;text-align:right;font-size:11px;line-height:14px;white-space:nowrap;">23.11.2009</div>
<div style="position:absolute;left:543.5px;top:169px;width:256px;text-align:right;font-size:11px;line-height:14px;white-space:nowrap;">43</div>
<div style="position:absolute;left:804px;top:169px;font-size:11px;color:#000;white-space:nowrap;line-height:14px;">D2</div>
<div style="position:absolute;left:52px;top:183px;font-size:11px;color:#000;white-space:nowrap;line-height:14px;">Anzahl</div>
<div style="position:absolute;left:136.2px;top:183px;width:300px;text-align:center;font-size:11px;line-height:14px;white-space:nowrap;">8731,218</div>
<div style="position:absolute;left:542px;top:183px;font-size:11px;color:#000;white-space:nowrap;line-height:14px;">TF</div>
<div style="position:absolute;left:414.5px;top:183px;width:326px;text-align:right;font-size:11px;line-height:14px;white-space:nowrap;">240</div>
<div style="position:absolute;left:543.5px;top:183px;width:256px;text-align:right;font-size:11px;line-height:14px;white-space:nowrap;">33</div>
<div style="position:absolute;left:804px;top:183px;font-size:11px;color:#000;white-space:nowrap;line-height:14px;">D3</div>
<div style="position:absolute;left:542px;top:197px;font-size:11px;color:#000;white-space:nowrap;line-height:14px;">&quot;+ mit den Uptrend</div>
<div style="position:absolute;left:804px;top:197px;font-size:11px;color:#000;white-space:nowrap;line-height:14px;">S1</div>
<div style="position:absolute;left:542px;top:211px;font-size:11px;color:#000;white-space:nowrap;line-height:14px;">&quot;+ CRV mit TA &gt; 2,0</div>
<div style="position:absolute;left:804px;top:211px;font-size:11px;color:#000;white-space:nowrap;line-height:14px;">S2</div>
<div style="position:absolute;left:804px;top:225px;font-size:11px;color:#000;white-space:nowrap;line-height:14px;">Fx1</div>
<div style="position:absolute;left:804px;top:239px;font-size:11px;color:#000;white-space:nowrap;line-height:14px;">Fx2</div>
<div style="position:absolute;left:804px;top:253px;font-size:11px;color:#000;white-space:nowrap;line-height:14px;">A1</div>
<div style="position:absolute;left:642.5px;top:253px;width:270px;text-align:right;font-size:11px;line-height:14px;white-space:nowrap;">7,44</div>
<div style="position:absolute;left:815px;top:267px;font-size:11px;color:#000;white-space:nowrap;line-height:14px;">A2</div>
<div style="position:absolute;left:619.5px;top:267px;width:270px;text-align:right;font-size:11px;line-height:14px;white-space:nowrap;">7,66</div>
<div style="position:absolute;left:52px;top:295px;font-size:11px;color:#000;white-space:nowrap;font-weight:bold;line-height:14px;">W/A</div>
<div style="position:absolute;left:56.69999999999999px;top:295px;width:300px;text-align:center;font-size:11px;line-height:14px;white-space:nowrap;font-weight:bold;letter-spacing:0.15px;">Markt</div>
<div style="position:absolute;left:136.2px;top:295px;width:300px;text-align:center;font-size:11px;line-height:14px;white-space:nowrap;font-weight:bold;letter-spacing:0.15px;">L/S</div>
<div style="position:absolute;left:196.7px;top:295px;width:300px;text-align:center;font-size:11px;line-height:14px;white-space:nowrap;font-weight:bold;letter-spacing:0.15px;">Kurs</div>
<div style="position:absolute;left:255.7px;top:295px;width:300px;text-align:center;font-size:11px;line-height:14px;white-space:nowrap;font-weight:bold;letter-spacing:0.15px;">SL</div>
<div style="position:absolute;left:309.2px;top:295px;width:300px;text-align:center;font-size:11px;line-height:14px;white-space:nowrap;font-weight:bold;letter-spacing:0.15px;">TP</div>
<div style="position:absolute;left:363.20000000000005px;top:295px;width:300px;text-align:center;font-size:11px;line-height:14px;white-space:nowrap;font-weight:bold;letter-spacing:0.15px;">E bis SL</div>
<div style="position:absolute;left:427.20000000000005px;top:295px;width:300px;text-align:center;font-size:11px;line-height:14px;white-space:nowrap;font-weight:bold;letter-spacing:0.15px;">CRV</div>
<div style="position:absolute;left:528.7px;top:295px;width:300px;text-align:center;font-size:11px;line-height:14px;white-space:nowrap;font-weight:bold;letter-spacing:0.15px;">TA</div>
<div style="position:absolute;left:622.7px;top:295px;width:300px;text-align:center;font-size:11px;line-height:14px;white-space:nowrap;font-weight:bold;letter-spacing:0.15px;">CRV (+TA)</div>
<div style="position:absolute;left:672.2px;top:295px;width:300px;text-align:center;font-size:11px;line-height:14px;white-space:nowrap;font-weight:bold;letter-spacing:0.15px;">Pos</div>
<div style="position:absolute;left:728.7px;top:295px;width:300px;text-align:center;font-size:11px;line-height:14px;white-space:nowrap;font-weight:bold;letter-spacing:0.15px;">Fi.kost</div>
<div style="position:absolute;left:795.2px;top:295px;width:300px;text-align:center;font-size:11px;line-height:14px;white-space:nowrap;font-weight:bold;letter-spacing:0.15px;">Ergebnis</div>
<div style="position:absolute;left:853.7px;top:295px;width:300px;text-align:center;font-size:11px;line-height:14px;white-space:nowrap;font-weight:bold;letter-spacing:0.15px;">vor Trade</div>
<div style="position:absolute;left:905.7px;top:295px;width:300px;text-align:center;font-size:11px;line-height:14px;white-space:nowrap;font-weight:bold;letter-spacing:0.15px;">R</div>
<div style="position:absolute;left:999.2px;top:295px;width:300px;text-align:center;font-size:11px;line-height:14px;white-space:nowrap;font-weight:bold;letter-spacing:0.15px;">Datum</div>
<div style="position:absolute;left:947.7px;top:295px;width:300px;text-align:center;font-size:11px;line-height:14px;white-space:nowrap;font-weight:bold;letter-spacing:0.15px;">ges R</div>
<div style="position:absolute;left:-149.5px;top:309px;width:248px;text-align:right;font-size:11px;line-height:14px;white-space:nowrap;">10100,00</div>
<div style="position:absolute;left:-149.5px;top:323px;width:248px;text-align:right;font-size:11px;line-height:14px;white-space:nowrap;">10000,00</div>
<div style="position:absolute;left:157px;top:309px;font-size:11px;color:#000;white-space:nowrap;line-height:14px;">Henkel</div>
<div style="position:absolute;left:136.2px;top:309px;width:300px;text-align:center;font-size:11px;line-height:14px;white-space:nowrap;">L</div>
<div style="position:absolute;left:316px;top:309px;font-size:11px;color:#000;white-space:nowrap;line-height:14px;">32,3700</div>
<div style="position:absolute;left:381px;top:309px;font-size:11px;color:#000;white-space:nowrap;line-height:14px;">31,7000</div>
<div style="position:absolute;left:434px;top:309px;font-size:11px;color:#000;white-space:nowrap;line-height:14px;">33,2850</div>
<div style="position:absolute;left:363.20000000000005px;top:309px;width:300px;text-align:center;font-size:11px;line-height:14px;white-space:nowrap;">0,6700</div>
<div style="position:absolute;left:427.20000000000005px;top:309px;width:300px;text-align:center;font-size:11px;line-height:14px;white-space:nowrap;">1,3657</div>
<div style="position:absolute;left:804px;top:309px;font-size:11px;color:#000;white-space:nowrap;line-height:14px;">0</div>
<div style="position:absolute;left:844px;top:309px;font-size:11px;color:#000;white-space:nowrap;line-height:14px;">0</div>
<div style="position:absolute;left:917px;top:309px;font-size:11px;color:#000;white-space:nowrap;line-height:14px;">0</div>
<div style="position:absolute;left:853.7px;top:309px;width:300px;text-align:center;font-size:11px;line-height:14px;white-space:nowrap;">10100</div>
<div style="position:absolute;left:905.7px;top:309px;width:300px;text-align:center;font-size:11px;line-height:14px;white-space:nowrap;">0</div>
<div style="position:absolute;left:1118px;top:309px;font-size:11px;color:#000;white-space:nowrap;line-height:14px;">23.11./14 15:00</div>
<div style="position:absolute;left:157px;top:323px;font-size:11px;color:#000;white-space:nowrap;line-height:14px;">Henkel</div>
<div style="position:absolute;left:136.2px;top:323px;width:300px;text-align:center;font-size:11px;line-height:14px;white-space:nowrap;">L</div>
<div style="position:absolute;left:316px;top:323px;font-size:11px;color:#000;white-space:nowrap;line-height:14px;">32,3700</div>
<div style="position:absolute;left:381px;top:323px;font-size:11px;color:#000;white-space:nowrap;line-height:14px;">31,7000</div>
<div style="position:absolute;left:434px;top:323px;font-size:11px;color:#000;white-space:nowrap;line-height:14px;">34,2000</div>
<div style="position:absolute;left:363.20000000000005px;top:323px;width:300px;text-align:center;font-size:11px;line-height:14px;white-space:nowrap;">0,6700</div>
<div style="position:absolute;left:427.20000000000005px;top:323px;width:300px;text-align:center;font-size:11px;line-height:14px;white-space:nowrap;">2,7313</div>
<div style="position:absolute;left:528.7px;top:323px;width:300px;text-align:center;font-size:11px;line-height:14px;white-space:nowrap;">33,2850</div>
<div style="position:absolute;left:622.7px;top:323px;width:300px;text-align:center;font-size:11px;line-height:14px;white-space:nowrap;">2,0485</div>
<div style="position:absolute;left:804px;top:323px;font-size:11px;color:#000;white-space:nowrap;line-height:14px;">0</div>
<div style="position:absolute;left:844px;top:323px;font-size:11px;color:#000;white-space:nowrap;line-height:14px;">0</div>
<div style="position:absolute;left:917px;top:323px;font-size:11px;color:#000;white-space:nowrap;line-height:14px;">0</div>
<div style="position:absolute;left:853.7px;top:323px;width:300px;text-align:center;font-size:11px;line-height:14px;white-space:nowrap;">10000</div>
<div style="position:absolute;left:905.7px;top:323px;width:300px;text-align:center;font-size:11px;line-height:14px;white-space:nowrap;">0</div>
<div style="position:absolute;left:947.7px;top:323px;width:300px;text-align:center;font-size:11px;line-height:14px;white-space:nowrap;">0</div>
<div style="position:absolute;left:1118px;top:323px;font-size:11px;color:#000;white-space:nowrap;line-height:14px;">23.11./14 15:00</div>
<div style="position:absolute;left:-114.3px;top:365px;width:300px;text-align:center;font-size:11px;line-height:14px;white-space:nowrap;font-weight:bold;letter-spacing:0.15px;">Zeile</div>
<div style="position:absolute;left:-74.3px;top:365px;width:300px;text-align:center;font-size:11px;line-height:14px;white-space:nowrap;font-weight:bold;letter-spacing:0.15px;">W/A</div>
<div style="position:absolute;left:-21.80000000000001px;top:365px;width:300px;text-align:center;font-size:11px;line-height:14px;white-space:nowrap;font-weight:bold;letter-spacing:0.15px;">Konto</div>
<div style="position:absolute;left:56.69999999999999px;top:365px;width:300px;text-align:center;font-size:11px;line-height:14px;white-space:nowrap;font-weight:bold;letter-spacing:0.15px;">Markt</div>
<div style="position:absolute;left:136.2px;top:365px;width:300px;text-align:center;font-size:11px;line-height:14px;white-space:nowrap;font-weight:bold;letter-spacing:0.15px;">L/S</div>
<div style="position:absolute;left:196.7px;top:365px;width:300px;text-align:center;font-size:11px;line-height:14px;white-space:nowrap;font-weight:bold;letter-spacing:0.15px;">Kurs</div>
<div style="position:absolute;left:255.7px;top:365px;width:300px;text-align:center;font-size:11px;line-height:14px;white-space:nowrap;font-weight:bold;letter-spacing:0.15px;">SL</div>
<div style="position:absolute;left:309.2px;top:365px;width:300px;text-align:center;font-size:11px;line-height:14px;white-space:nowrap;font-weight:bold;letter-spacing:0.15px;">TP</div>
<div style="position:absolute;left:363.20000000000005px;top:365px;width:300px;text-align:center;font-size:11px;line-height:14px;white-space:nowrap;font-weight:bold;letter-spacing:0.15px;">E bis SL</div>
<div style="position:absolute;left:427.20000000000005px;top:365px;width:300px;text-align:center;font-size:11px;line-height:14px;white-space:nowrap;font-weight:bold;letter-spacing:0.15px;">CRV</div>
<div style="position:absolute;left:528.7px;top:365px;width:300px;text-align:center;font-size:11px;line-height:14px;white-space:nowrap;font-weight:bold;letter-spacing:0.15px;">TA</div>
<div style="position:absolute;left:622.7px;top:365px;width:300px;text-align:center;font-size:11px;line-height:14px;white-space:nowrap;font-weight:bold;letter-spacing:0.15px;">CRV (+TA)</div>
<div style="position:absolute;left:672.2px;top:365px;width:300px;text-align:center;font-size:11px;line-height:14px;white-space:nowrap;font-weight:bold;letter-spacing:0.15px;">Pos</div>
<div style="position:absolute;left:728.7px;top:365px;width:300px;text-align:center;font-size:11px;line-height:14px;white-space:nowrap;font-weight:bold;letter-spacing:0.15px;">Fi.kost</div>
<div style="position:absolute;left:795.2px;top:365px;width:300px;text-align:center;font-size:11px;line-height:14px;white-space:nowrap;font-weight:bold;letter-spacing:0.15px;">Ergebnis</div>
<div style="position:absolute;left:853.7px;top:365px;width:300px;text-align:center;font-size:11px;line-height:14px;white-space:nowrap;font-weight:bold;letter-spacing:0.15px;">vor Trade</div>
<div style="position:absolute;left:905.7px;top:365px;width:300px;text-align:center;font-size:11px;line-height:14px;white-space:nowrap;font-weight:bold;letter-spacing:0.15px;">R</div>
<div style="position:absolute;left:999.2px;top:365px;width:300px;text-align:center;font-size:11px;line-height:14px;white-space:nowrap;font-weight:bold;letter-spacing:0.15px;">Datum</div>
<div style="position:absolute;left:-178.5px;top:381px;width:226px;text-align:right;font-size:11px;line-height:14px;white-space:nowrap;">527</div>
<div style="position:absolute;left:52px;top:381px;font-size:11px;color:#000;white-space:nowrap;line-height:14px;">Aktiv</div>
<div style="position:absolute;left:-98.5px;top:381px;width:251px;text-align:right;font-size:11px;line-height:14px;white-space:nowrap;">10100,00</div>
<div style="position:absolute;left:157px;top:381px;font-size:11px;color:#000;white-space:nowrap;line-height:14px;">Linde</div>
<div style="position:absolute;left:136.2px;top:381px;width:300px;text-align:center;font-size:11px;line-height:14px;white-space:nowrap;">L</div>
<div style="position:absolute;left:196.7px;top:381px;width:300px;text-align:center;font-size:11px;line-height:14px;white-space:nowrap;">71,9</div>
<div style="position:absolute;left:255.7px;top:381px;width:300px;text-align:center;font-size:11px;line-height:14px;white-space:nowrap;">70,58</div>
<div style="position:absolute;left:309.2px;top:381px;width:300px;text-align:center;font-size:11px;line-height:14px;white-space:nowrap;">76,89</div>
<div style="position:absolute;left:363.20000000000005px;top:381px;width:300px;text-align:center;font-size:11px;line-height:14px;white-space:nowrap;">1,32</div>
<div style="position:absolute;left:427.20000000000005px;top:381px;width:300px;text-align:center;font-size:11px;line-height:14px;white-space:nowrap;">3,78</div>
<div style="position:absolute;left:622.7px;top:381px;width:300px;text-align:center;font-size:11px;line-height:14px;white-space:nowrap;">5,67</div>
<div style="position:absolute;left:672.2px;top:381px;width:300px;text-align:center;font-size:11px;line-height:14px;white-space:nowrap;">31</div>
<div style="position:absolute;left:728.7px;top:381px;width:300px;text-align:center;font-size:11px;line-height:14px;white-space:nowrap;">-6,91</div>
<div style="position:absolute;left:795.2px;top:381px;width:300px;text-align:center;font-size:11px;line-height:14px;white-space:nowrap;">169,88</div>
<div style="position:absolute;left:853.7px;top:381px;width:300px;text-align:center;font-size:11px;line-height:14px;white-space:nowrap;">10100,00</div>
<div style="position:absolute;left:905.7px;top:381px;width:300px;text-align:center;font-size:11px;line-height:14px;white-space:nowrap;">1,68</div>
<div style="position:absolute;left:1118px;top:381px;font-size:11px;color:#000;white-space:nowrap;line-height:14px;">30.10./16 12:00</div>
<div style="position:absolute;left:52px;top:396px;font-size:11px;color:#000;white-space:nowrap;line-height:14px;">Aktiv</div>
<div style="position:absolute;left:157px;top:396px;font-size:11px;color:#000;white-space:nowrap;line-height:14px;">Linde</div>
<div style="position:absolute;left:136.2px;top:396px;width:300px;text-align:center;font-size:11px;line-height:14px;white-space:nowrap;">L</div>
<div style="position:absolute;left:196.7px;top:396px;width:300px;text-align:center;font-size:11px;line-height:14px;white-space:nowrap;">71,9</div>
<div style="position:absolute;left:255.7px;top:396px;width:300px;text-align:center;font-size:11px;line-height:14px;white-space:nowrap;">70,58</div>
<div style="position:absolute;left:309.2px;top:396px;width:300px;text-align:center;font-size:11px;line-height:14px;white-space:nowrap;">81,88</div>
<div style="position:absolute;left:363.20000000000005px;top:396px;width:300px;text-align:center;font-size:11px;line-height:14px;white-space:nowrap;">1,32</div>
<div style="position:absolute;left:427.20000000000005px;top:396px;width:300px;text-align:center;font-size:11px;line-height:14px;white-space:nowrap;">7,56</div>
<div style="position:absolute;left:528.7px;top:396px;width:300px;text-align:center;font-size:11px;line-height:14px;white-space:nowrap;">76,8900</div>
<div style="position:absolute;left:622.7px;top:396px;width:300px;text-align:center;font-size:11px;line-height:14px;white-space:nowrap;">5,67</div>
<div style="position:absolute;left:672.2px;top:396px;width:300px;text-align:center;font-size:11px;line-height:14px;white-space:nowrap;">0</div>
<div style="position:absolute;left:728.7px;top:396px;width:300px;text-align:center;font-size:11px;line-height:14px;white-space:nowrap;">0,00</div>
<div style="position:absolute;left:795.2px;top:396px;width:300px;text-align:center;font-size:11px;line-height:14px;white-space:nowrap;">0,00</div>
<div style="position:absolute;left:853.7px;top:396px;width:300px;text-align:center;font-size:11px;line-height:14px;white-space:nowrap;">10100,00</div>
<div style="position:absolute;left:905.7px;top:396px;width:300px;text-align:center;font-size:11px;line-height:14px;white-space:nowrap;">0,00</div>
<div style="position:absolute;left:947.7px;top:396px;width:300px;text-align:center;font-size:11px;line-height:14px;white-space:nowrap;">1,68</div>
<div style="position:absolute;left:1118px;top:396px;font-size:11px;color:#000;white-space:nowrap;line-height:14px;">30.10./16 12:00</div>
<div style="position:absolute;left:-178.5px;top:438px;width:226px;text-align:right;font-size:11px;line-height:14px;white-space:nowrap;">1007</div>
<div style="position:absolute;left:52px;top:438px;font-size:11px;color:#000;white-space:nowrap;line-height:14px;">Aktiv</div>
<div style="position:absolute;left:-98.5px;top:438px;width:251px;text-align:right;font-size:11px;line-height:14px;white-space:nowrap;">10200,00</div>
<div style="position:absolute;left:157px;top:438px;font-size:11px;color:#000;white-space:nowrap;line-height:14px;">Adidas</div>
<div style="position:absolute;left:136.2px;top:438px;width:300px;text-align:center;font-size:11px;line-height:14px;white-space:nowrap;">L</div>
<div style="position:absolute;left:196.7px;top:438px;width:300px;text-align:center;font-size:11px;line-height:14px;white-space:nowrap;">36,9</div>
<div style="position:absolute;left:255.7px;top:438px;width:300px;text-align:center;font-size:11px;line-height:14px;white-space:nowrap;">35,05</div>
<div style="position:absolute;left:309.2px;top:438px;width:300px;text-align:center;font-size:11px;line-height:14px;white-space:nowrap;">38,75</div>
<div style="position:absolute;left:363.20000000000005px;top:438px;width:300px;text-align:center;font-size:11px;line-height:14px;white-space:nowrap;">1,85</div>
<div style="position:absolute;left:427.20000000000005px;top:438px;width:300px;text-align:center;font-size:11px;line-height:14px;white-space:nowrap;">1,00</div>
<div style="position:absolute;left:622.7px;top:438px;width:300px;text-align:center;font-size:11px;line-height:14px;white-space:nowrap;">1,50</div>
<div style="position:absolute;left:672.2px;top:438px;width:300px;text-align:center;font-size:11px;line-height:14px;white-space:nowrap;">0</div>
<div style="position:absolute;left:728.7px;top:438px;width:300px;text-align:center;font-size:11px;line-height:14px;white-space:nowrap;">0,00</div>
<div style="position:absolute;left:795.2px;top:438px;width:300px;text-align:center;font-size:11px;line-height:14px;white-space:nowrap;">0,00</div>
<div style="position:absolute;left:853.7px;top:438px;width:300px;text-align:center;font-size:11px;line-height:14px;white-space:nowrap;">10200,00</div>
<div style="position:absolute;left:905.7px;top:438px;width:300px;text-align:center;font-size:11px;line-height:14px;white-space:nowrap;">0,00</div>
<div style="position:absolute;left:1118px;top:438px;font-size:11px;color:#000;white-space:nowrap;line-height:14px;">04.12./12 11:00</div>
<div style="position:absolute;left:52px;top:452px;font-size:11px;color:#000;white-space:nowrap;line-height:14px;">Aktiv</div>
<div style="position:absolute;left:157px;top:452px;font-size:11px;color:#000;white-space:nowrap;line-height:14px;">Adidas</div>
<div style="position:absolute;left:136.2px;top:452px;width:300px;text-align:center;font-size:11px;line-height:14px;white-space:nowrap;">L</div>
<div style="position:absolute;left:196.7px;top:452px;width:300px;text-align:center;font-size:11px;line-height:14px;white-space:nowrap;">36,9</div>
<div style="position:absolute;left:255.7px;top:452px;width:300px;text-align:center;font-size:11px;line-height:14px;white-space:nowrap;">35,05</div>
<div style="position:absolute;left:309.2px;top:452px;width:300px;text-align:center;font-size:11px;line-height:14px;white-space:nowrap;">40,6</div>
<div style="position:absolute;left:363.20000000000005px;top:452px;width:300px;text-align:center;font-size:11px;line-height:14px;white-space:nowrap;">1,85</div>
<div style="position:absolute;left:427.20000000000005px;top:452px;width:300px;text-align:center;font-size:11px;line-height:14px;white-space:nowrap;">2,00</div>
<div style="position:absolute;left:528.7px;top:452px;width:300px;text-align:center;font-size:11px;line-height:14px;white-space:nowrap;">38,7500</div>
<div style="position:absolute;left:622.7px;top:452px;width:300px;text-align:center;font-size:11px;line-height:14px;white-space:nowrap;">1,50</div>
<div style="position:absolute;left:672.2px;top:452px;width:300px;text-align:center;font-size:11px;line-height:14px;white-space:nowrap;">0</div>
<div style="position:absolute;left:728.7px;top:452px;width:300px;text-align:center;font-size:11px;line-height:14px;white-space:nowrap;">0,00</div>
<div style="position:absolute;left:795.2px;top:452px;width:300px;text-align:center;font-size:11px;line-height:14px;white-space:nowrap;">0,00</div>
<div style="position:absolute;left:853.7px;top:452px;width:300px;text-align:center;font-size:11px;line-height:14px;white-space:nowrap;">10200,00</div>
<div style="position:absolute;left:905.7px;top:452px;width:300px;text-align:center;font-size:11px;line-height:14px;white-space:nowrap;">0,00</div>
<div style="position:absolute;left:947.7px;top:452px;width:300px;text-align:center;font-size:11px;line-height:14px;white-space:nowrap;">0,00</div>
<div style="position:absolute;left:1118px;top:452px;font-size:11px;color:#000;white-space:nowrap;line-height:14px;">04.12./12 11:00</div>
<div style="position:absolute;left:-178.5px;top:494px;width:226px;text-align:right;font-size:11px;line-height:14px;white-space:nowrap;">797</div>
<div style="position:absolute;left:52px;top:494px;font-size:11px;color:#000;white-space:nowrap;line-height:14px;">Aktiv</div>
<div style="position:absolute;left:-98.5px;top:494px;width:251px;text-align:right;font-size:11px;line-height:14px;white-space:nowrap;">10100,00</div>
<div style="position:absolute;left:157px;top:494px;font-size:11px;color:#000;white-space:nowrap;line-height:14px;">Solarworld</div>
<div style="position:absolute;left:136.2px;top:494px;width:300px;text-align:center;font-size:11px;line-height:14px;white-space:nowrap;">S</div>
<div style="position:absolute;left:196.7px;top:494px;width:300px;text-align:center;font-size:11px;line-height:14px;white-space:nowrap;">15,67</div>
<div style="position:absolute;left:255.7px;top:494px;width:300px;text-align:center;font-size:11px;line-height:14px;white-space:nowrap;">17,03</div>
<div style="position:absolute;left:309.2px;top:494px;width:300px;text-align:center;font-size:11px;line-height:14px;white-space:nowrap;">13,835</div>
<div style="position:absolute;left:363.20000000000005px;top:494px;width:300px;text-align:center;font-size:11px;line-height:14px;white-space:nowrap;">1,36</div>
<div style="position:absolute;left:427.20000000000005px;top:494px;width:300px;text-align:center;font-size:11px;line-height:14px;white-space:nowrap;">1,35</div>
<div style="position:absolute;left:622.7px;top:494px;width:300px;text-align:center;font-size:11px;line-height:14px;white-space:nowrap;">2,02</div>
<div style="position:absolute;left:672.2px;top:494px;width:300px;text-align:center;font-size:11px;line-height:14px;white-space:nowrap;">0</div>
<div style="position:absolute;left:728.7px;top:494px;width:300px;text-align:center;font-size:11px;line-height:14px;white-space:nowrap;">0,00</div>
<div style="position:absolute;left:795.2px;top:494px;width:300px;text-align:center;font-size:11px;line-height:14px;white-space:nowrap;">0,00</div>
<div style="position:absolute;left:853.7px;top:494px;width:300px;text-align:center;font-size:11px;line-height:14px;white-space:nowrap;">10100,00</div>
<div style="position:absolute;left:905.7px;top:494px;width:300px;text-align:center;font-size:11px;line-height:14px;white-space:nowrap;">0,00</div>
<div style="position:absolute;left:1118px;top:494px;font-size:11px;color:#000;white-space:nowrap;line-height:14px;">25.11./13 10:00</div>
<div style="position:absolute;left:52px;top:508px;font-size:11px;color:#000;white-space:nowrap;line-height:14px;">Aktiv</div>
<div style="position:absolute;left:157px;top:508px;font-size:11px;color:#000;white-space:nowrap;line-height:14px;">Solarworld</div>
<div style="position:absolute;left:136.2px;top:508px;width:300px;text-align:center;font-size:11px;line-height:14px;white-space:nowrap;">S</div>
<div style="position:absolute;left:196.7px;top:508px;width:300px;text-align:center;font-size:11px;line-height:14px;white-space:nowrap;">15,67</div>
<div style="position:absolute;left:255.7px;top:508px;width:300px;text-align:center;font-size:11px;line-height:14px;white-space:nowrap;">17,03</div>
<div style="position:absolute;left:309.2px;top:508px;width:300px;text-align:center;font-size:11px;line-height:14px;white-space:nowrap;">12</div>
<div style="position:absolute;left:363.20000000000005px;top:508px;width:300px;text-align:center;font-size:11px;line-height:14px;white-space:nowrap;">1,36</div>
<div style="position:absolute;left:427.20000000000005px;top:508px;width:300px;text-align:center;font-size:11px;line-height:14px;white-space:nowrap;">2,70</div>
<div style="position:absolute;left:528.7px;top:508px;width:300px;text-align:center;font-size:11px;line-height:14px;white-space:nowrap;">13,8350</div>
<div style="position:absolute;left:622.7px;top:508px;width:300px;text-align:center;font-size:11px;line-height:14px;white-space:nowrap;">2,02</div>
<div style="position:absolute;left:672.2px;top:508px;width:300px;text-align:center;font-size:11px;line-height:14px;white-space:nowrap;">0</div>
<div style="position:absolute;left:728.7px;top:508px;width:300px;text-align:center;font-size:11px;line-height:14px;white-space:nowrap;">0,00</div>
<div style="position:absolute;left:795.2px;top:508px;width:300px;text-align:center;font-size:11px;line-height:14px;white-space:nowrap;">0,00</div>
<div style="position:absolute;left:853.7px;top:508px;width:300px;text-align:center;font-size:11px;line-height:14px;white-space:nowrap;">10100,00</div>
<div style="position:absolute;left:905.7px;top:508px;width:300px;text-align:center;font-size:11px;line-height:14px;white-space:nowrap;">0,00</div>
<div style="position:absolute;left:947.7px;top:508px;width:300px;text-align:center;font-size:11px;line-height:14px;white-space:nowrap;">0,00</div>
<div style="position:absolute;left:1118px;top:508px;font-size:11px;color:#000;white-space:nowrap;line-height:14px;">25.11./13 10:00</div>
<div style="position:absolute;left:-178.5px;top:550px;width:226px;text-align:right;font-size:11px;line-height:14px;white-space:nowrap;">902</div>
<div style="position:absolute;left:52px;top:550px;font-size:11px;color:#000;white-space:nowrap;line-height:14px;">Aktiv</div>
<div style="position:absolute;left:-98.5px;top:550px;width:251px;text-align:right;font-size:11px;line-height:14px;white-space:nowrap;">10100,00</div>
<div style="position:absolute;left:157px;top:550px;font-size:11px;color:#000;white-space:nowrap;line-height:14px;">Cisco Syst.</div>
<div style="position:absolute;left:136.2px;top:550px;width:300px;text-align:center;font-size:11px;line-height:14px;white-space:nowrap;">L</div>
<div style="position:absolute;left:196.7px;top:550px;width:300px;text-align:center;font-size:11px;line-height:14px;white-space:nowrap;">23,28</div>
<div style="position:absolute;left:255.7px;top:550px;width:300px;text-align:center;font-size:11px;line-height:14px;white-space:nowrap;">22,5</div>
<div style="position:absolute;left:309.2px;top:550px;width:300px;text-align:center;font-size:11px;line-height:14px;white-space:nowrap;">24,44</div>
<div style="position:absolute;left:363.20000000000005px;top:550px;width:300px;text-align:center;font-size:11px;line-height:14px;white-space:nowrap;">0,78</div>
<div style="position:absolute;left:427.20000000000005px;top:550px;width:300px;text-align:center;font-size:11px;line-height:14px;white-space:nowrap;">1,49</div>
<div style="position:absolute;left:622.7px;top:550px;width:300px;text-align:center;font-size:11px;line-height:14px;white-space:nowrap;">2,23</div>
<div style="position:absolute;left:672.2px;top:550px;width:300px;text-align:center;font-size:11px;line-height:14px;white-space:nowrap;">0</div>
<div style="position:absolute;left:728.7px;top:550px;width:300px;text-align:center;font-size:11px;line-height:14px;white-space:nowrap;">0,00</div>
<div style="position:absolute;left:795.2px;top:550px;width:300px;text-align:center;font-size:11px;line-height:14px;white-space:nowrap;">0,00</div>
<div style="position:absolute;left:853.7px;top:550px;width:300px;text-align:center;font-size:11px;line-height:14px;white-space:nowrap;">10100,00</div>
<div style="position:absolute;left:905.7px;top:550px;width:300px;text-align:center;font-size:11px;line-height:14px;white-space:nowrap;">0,00</div>
<div style="position:absolute;left:1118px;top:550px;font-size:11px;color:#000;white-space:nowrap;line-height:14px;">27.11./16 11:00</div>
<div style="position:absolute;left:52px;top:564px;font-size:11px;color:#000;white-space:nowrap;line-height:14px;">Aktiv</div>
<div style="position:absolute;left:157px;top:564px;font-size:11px;color:#000;white-space:nowrap;line-height:14px;">Cisco Syst.</div>
<div style="position:absolute;left:136.2px;top:564px;width:300px;text-align:center;font-size:11px;line-height:14px;white-space:nowrap;">L</div>
<div style="position:absolute;left:196.7px;top:564px;width:300px;text-align:center;font-size:11px;line-height:14px;white-space:nowrap;">23,28</div>
<div style="position:absolute;left:255.7px;top:564px;width:300px;text-align:center;font-size:11px;line-height:14px;white-space:nowrap;">22,5</div>
<div style="position:absolute;left:309.2px;top:564px;width:300px;text-align:center;font-size:11px;line-height:14px;white-space:nowrap;">25,6</div>
<div style="position:absolute;left:363.20000000000005px;top:564px;width:300px;text-align:center;font-size:11px;line-height:14px;white-space:nowrap;">0,78</div>
<div style="position:absolute;left:427.20000000000005px;top:564px;width:300px;text-align:center;font-size:11px;line-height:14px;white-space:nowrap;">2,97</div>
<div style="position:absolute;left:528.7px;top:564px;width:300px;text-align:center;font-size:11px;line-height:14px;white-space:nowrap;">24,4400</div>
<div style="position:absolute;left:622.7px;top:564px;width:300px;text-align:center;font-size:11px;line-height:14px;white-space:nowrap;">2,23</div>
<div style="position:absolute;left:672.2px;top:564px;width:300px;text-align:center;font-size:11px;line-height:14px;white-space:nowrap;">0</div>
<div style="position:absolute;left:728.7px;top:564px;width:300px;text-align:center;font-size:11px;line-height:14px;white-space:nowrap;">0,00</div>
<div style="position:absolute;left:795.2px;top:564px;width:300px;text-align:center;font-size:11px;line-height:14px;white-space:nowrap;">0,00</div>
<div style="position:absolute;left:853.7px;top:564px;width:300px;text-align:center;font-size:11px;line-height:14px;white-space:nowrap;">10100,00</div>
<div style="position:absolute;left:905.7px;top:564px;width:300px;text-align:center;font-size:11px;line-height:14px;white-space:nowrap;">0,00</div>
<div style="position:absolute;left:947.7px;top:564px;width:300px;text-align:center;font-size:11px;line-height:14px;white-space:nowrap;">0,00</div>
<div style="position:absolute;left:1118px;top:564px;font-size:11px;color:#000;white-space:nowrap;line-height:14px;">27.11./16 11:00</div>
<div style="position:absolute;left:-178.5px;top:606px;width:226px;text-align:right;font-size:11px;line-height:14px;white-space:nowrap;">617</div>
<div style="position:absolute;left:52px;top:606px;font-size:11px;color:#000;white-space:nowrap;line-height:14px;">Aktiv</div>
<div style="position:absolute;left:-98.5px;top:606px;width:251px;text-align:right;font-size:11px;line-height:14px;white-space:nowrap;">10100,00</div>
<div style="position:absolute;left:157px;top:606px;font-size:11px;color:#000;white-space:nowrap;line-height:14px;">3M Comp.</div>
<div style="position:absolute;left:136.2px;top:606px;width:300px;text-align:center;font-size:11px;line-height:14px;white-space:nowrap;">L</div>
<div style="position:absolute;left:196.7px;top:606px;width:300px;text-align:center;font-size:11px;line-height:14px;white-space:nowrap;">74,05</div>
<div style="position:absolute;left:255.7px;top:606px;width:300px;text-align:center;font-size:11px;line-height:14px;white-space:nowrap;">71,5</div>
<div style="position:absolute;left:309.2px;top:606px;width:300px;text-align:center;font-size:11px;line-height:14px;white-space:nowrap;">76,525</div>
<div style="position:absolute;left:363.20000000000005px;top:606px;width:300px;text-align:center;font-size:11px;line-height:14px;white-space:nowrap;">2,55</div>
<div style="position:absolute;left:427.20000000000005px;top:606px;width:300px;text-align:center;font-size:11px;line-height:14px;white-space:nowrap;">0,97</div>
<div style="position:absolute;left:622.7px;top:606px;width:300px;text-align:center;font-size:11px;line-height:14px;white-space:nowrap;">1,46</div>
<div style="position:absolute;left:672.2px;top:606px;width:300px;text-align:center;font-size:11px;line-height:14px;white-space:nowrap;">28</div>
<div style="position:absolute;left:728.7px;top:606px;width:300px;text-align:center;font-size:11px;line-height:14px;white-space:nowrap;">-3,85</div>
<div style="position:absolute;left:795.2px;top:606px;width:300px;text-align:center;font-size:11px;line-height:14px;white-space:nowrap;">59,35</div>
<div style="position:absolute;left:853.7px;top:606px;width:300px;text-align:center;font-size:11px;line-height:14px;white-space:nowrap;">10100,00</div>
<div style="position:absolute;left:905.7px;top:606px;width:300px;text-align:center;font-size:11px;line-height:14px;white-space:nowrap;">0,59</div>
<div style="position:absolute;left:1121px;top:606px;font-size:11px;color:#000;white-space:nowrap;line-height:14px;"> 4.11./20:14</div>
<div style="position:absolute;left:52px;top:620px;font-size:11px;color:#000;white-space:nowrap;line-height:14px;">Aktiv</div>
<div style="position:absolute;left:157px;top:620px;font-size:11px;color:#000;white-space:nowrap;line-height:14px;">3M Comp.</div>
<div style="position:absolute;left:136.2px;top:620px;width:300px;text-align:center;font-size:11px;line-height:14px;white-space:nowrap;">L</div>
<div style="position:absolute;left:196.7px;top:620px;width:300px;text-align:center;font-size:11px;line-height:14px;white-space:nowrap;">74,05</div>
<div style="position:absolute;left:255.7px;top:620px;width:300px;text-align:center;font-size:11px;line-height:14px;white-space:nowrap;">71,5</div>
<div style="position:absolute;left:309.2px;top:620px;width:300px;text-align:center;font-size:11px;line-height:14px;white-space:nowrap;">79</div>
<div style="position:absolute;left:363.20000000000005px;top:620px;width:300px;text-align:center;font-size:11px;line-height:14px;white-space:nowrap;">2,55</div>
<div style="position:absolute;left:427.20000000000005px;top:620px;width:300px;text-align:center;font-size:11px;line-height:14px;white-space:nowrap;">1,94</div>
<div style="position:absolute;left:528.7px;top:620px;width:300px;text-align:center;font-size:11px;line-height:14px;white-space:nowrap;">76,5250</div>
<div style="position:absolute;left:622.7px;top:620px;width:300px;text-align:center;font-size:11px;line-height:14px;white-space:nowrap;">1,46</div>
<div style="position:absolute;left:672.2px;top:620px;width:300px;text-align:center;font-size:11px;line-height:14px;white-space:nowrap;">0</div>
<div style="position:absolute;left:728.7px;top:620px;width:300px;text-align:center;font-size:11px;line-height:14px;white-space:nowrap;">0,00</div>
<div style="position:absolute;left:795.2px;top:620px;width:300px;text-align:center;font-size:11px;line-height:14px;white-space:nowrap;">0,00</div>
<div style="position:absolute;left:853.7px;top:620px;width:300px;text-align:center;font-size:11px;line-height:14px;white-space:nowrap;">10100,00</div>
<div style="position:absolute;left:905.7px;top:620px;width:300px;text-align:center;font-size:11px;line-height:14px;white-space:nowrap;">0,00</div>
<div style="position:absolute;left:947.7px;top:620px;width:300px;text-align:center;font-size:11px;line-height:14px;white-space:nowrap;">0,59</div>
<div style="position:absolute;left:1118px;top:620px;font-size:11px;color:#000;white-space:nowrap;line-height:14px;">4.11./20:14</div>
<div style="position:absolute;left:0px;top:68px;width:1161px;height:1px;background:#8d9db2;"></div>
<div style="position:absolute;left:21px;top:69px;width:1140px;height:15px;background:linear-gradient(#f6f9fd,#e4ebf5 60%,#d9e2ee);"></div>
<div style="position:absolute;left:0px;top:84px;width:1161px;height:1px;background:#a3b0c0;"></div>
<div style="position:absolute;left:49px;top:69px;width:1px;height:15px;background:#a6b3c4;"></div>
<div style="position:absolute;left:21px;top:70px;width:28px;height:15px;line-height:15px;text-align:center;font-size:11px;color:#303a48;">A</div>
<div style="position:absolute;left:50px;top:69px;width:50px;height:15px;background:linear-gradient(#f9d99a,#f7c66c 60%,#f3b54b);"></div>
<div style="position:absolute;left:100px;top:69px;width:1px;height:15px;background:#a6b3c4;"></div>
<div style="position:absolute;left:50px;top:70px;width:50px;height:15px;line-height:15px;text-align:center;font-size:11px;color:#303a48;">B</div>
<div style="position:absolute;left:154px;top:69px;width:1px;height:15px;background:#a6b3c4;"></div>
<div style="position:absolute;left:101px;top:70px;width:53px;height:15px;line-height:15px;text-align:center;font-size:11px;color:#303a48;">C</div>
<div style="position:absolute;left:257px;top:69px;width:1px;height:15px;background:#a6b3c4;"></div>
<div style="position:absolute;left:155px;top:70px;width:102px;height:15px;line-height:15px;text-align:center;font-size:11px;color:#303a48;">D</div>
<div style="position:absolute;left:313px;top:69px;width:1px;height:15px;background:#a6b3c4;"></div>
<div style="position:absolute;left:258px;top:70px;width:55px;height:15px;line-height:15px;text-align:center;font-size:11px;color:#303a48;">E</div>
<div style="position:absolute;left:378px;top:69px;width:1px;height:15px;background:#a6b3c4;"></div>
<div style="position:absolute;left:314px;top:70px;width:64px;height:15px;line-height:15px;text-align:center;font-size:11px;color:#303a48;">F</div>
<div style="position:absolute;left:431px;top:69px;width:1px;height:15px;background:#a6b3c4;"></div>
<div style="position:absolute;left:379px;top:70px;width:52px;height:15px;line-height:15px;text-align:center;font-size:11px;color:#303a48;">G</div>
<div style="position:absolute;left:485px;top:69px;width:1px;height:15px;background:#a6b3c4;"></div>
<div style="position:absolute;left:432px;top:70px;width:53px;height:15px;line-height:15px;text-align:center;font-size:11px;color:#303a48;">H</div>
<div style="position:absolute;left:539px;top:69px;width:1px;height:15px;background:#a6b3c4;"></div>
<div style="position:absolute;left:486px;top:70px;width:53px;height:15px;line-height:15px;text-align:center;font-size:11px;color:#303a48;">I</div>
<div style="position:absolute;left:613px;top:69px;width:1px;height:15px;background:#a6b3c4;"></div>
<div style="position:absolute;left:540px;top:70px;width:73px;height:15px;line-height:15px;text-align:center;font-size:11px;color:#303a48;">J</div>
<div style="position:absolute;left:742px;top:69px;width:1px;height:15px;background:#a6b3c4;"></div>
<div style="position:absolute;left:614px;top:70px;width:128px;height:15px;line-height:15px;text-align:center;font-size:11px;color:#303a48;">K</div>
<div style="position:absolute;left:801px;top:69px;width:1px;height:15px;background:#a6b3c4;"></div>
<div style="position:absolute;left:743px;top:70px;width:58px;height:15px;line-height:15px;text-align:center;font-size:11px;color:#303a48;">L</div>
<div style="position:absolute;left:841px;top:69px;width:1px;height:15px;background:#a6b3c4;"></div>
<div style="position:absolute;left:802px;top:70px;width:39px;height:15px;line-height:15px;text-align:center;font-size:11px;color:#303a48;">M</div>
<div style="position:absolute;left:914px;top:69px;width:1px;height:15px;background:#a6b3c4;"></div>
<div style="position:absolute;left:842px;top:70px;width:72px;height:15px;line-height:15px;text-align:center;font-size:11px;color:#303a48;">N</div>
<div style="position:absolute;left:974px;top:69px;width:1px;height:15px;background:#a6b3c4;"></div>
<div style="position:absolute;left:915px;top:70px;width:59px;height:15px;line-height:15px;text-align:center;font-size:11px;color:#303a48;">O</div>
<div style="position:absolute;left:1031px;top:69px;width:1px;height:15px;background:#a6b3c4;"></div>
<div style="position:absolute;left:975px;top:70px;width:56px;height:15px;line-height:15px;text-align:center;font-size:11px;color:#303a48;">P</div>
<div style="position:absolute;left:1078px;top:69px;width:1px;height:15px;background:#a6b3c4;"></div>
<div style="position:absolute;left:1032px;top:70px;width:46px;height:15px;line-height:15px;text-align:center;font-size:11px;color:#303a48;">Q</div>
<div style="position:absolute;left:1115px;top:69px;width:1px;height:15px;background:#a6b3c4;"></div>
<div style="position:absolute;left:1079px;top:70px;width:36px;height:15px;line-height:15px;text-align:center;font-size:11px;color:#303a48;">R</div>
<div style="position:absolute;left:1181px;top:69px;width:1px;height:15px;background:#a6b3c4;"></div>
<div style="position:absolute;left:1116px;top:70px;width:65px;height:15px;line-height:15px;text-align:center;font-size:11px;color:#303a48;">S</div>
<div style="position:absolute;left:0px;top:69px;width:20px;height:15px;background:#a9c4e9;"></div>
<svg style="position:absolute;left:0;top:69px" width="20" height="15"><polygon points="15.5,5 15.5,11.5 9.5,11.5" fill="#eef3fa"/></svg>
<div style="position:absolute;left:20px;top:69px;width:1px;height:15px;background:#95a5ba;"></div>
<div style="position:absolute;left:0px;top:85px;width:20px;height:548px;background:#e4ecf7;"></div>
<div style="position:absolute;left:20px;top:84px;width:1px;height:549px;background:#8e9cb0;"></div>
<div style="position:absolute;left:0px;top:98px;width:20px;height:1px;background:#c0ccdb;"></div>
<div style="position:absolute;left:0px;top:85px;width:19px;height:14px;line-height:14px;text-align:center;font-size:11px;color:#303a48;">1</div>
<div style="position:absolute;left:0px;top:112px;width:20px;height:1px;background:#c0ccdb;"></div>
<div style="position:absolute;left:0px;top:99px;width:19px;height:14px;line-height:14px;text-align:center;font-size:11px;color:#303a48;">2</div>
<div style="position:absolute;left:0px;top:126px;width:20px;height:1px;background:#c0ccdb;"></div>
<div style="position:absolute;left:0px;top:113px;width:19px;height:14px;line-height:14px;text-align:center;font-size:11px;color:#303a48;">3</div>
<div style="position:absolute;left:0px;top:140px;width:20px;height:1px;background:#c0ccdb;"></div>
<div style="position:absolute;left:0px;top:127px;width:19px;height:14px;line-height:14px;text-align:center;font-size:11px;color:#303a48;">4</div>
<div style="position:absolute;left:0px;top:154px;width:20px;height:1px;background:#c0ccdb;"></div>
<div style="position:absolute;left:0px;top:141px;width:19px;height:14px;line-height:14px;text-align:center;font-size:11px;color:#303a48;">5</div>
<div style="position:absolute;left:0px;top:168px;width:20px;height:1px;background:#c0ccdb;"></div>
<div style="position:absolute;left:0px;top:155px;width:19px;height:14px;line-height:14px;text-align:center;font-size:11px;color:#303a48;">6</div>
<div style="position:absolute;left:0px;top:182px;width:20px;height:1px;background:#c0ccdb;"></div>
<div style="position:absolute;left:0px;top:169px;width:19px;height:14px;line-height:14px;text-align:center;font-size:11px;color:#303a48;">7</div>
<div style="position:absolute;left:0px;top:196px;width:20px;height:1px;background:#c0ccdb;"></div>
<div style="position:absolute;left:0px;top:183px;width:19px;height:14px;line-height:14px;text-align:center;font-size:11px;color:#303a48;">8</div>
<div style="position:absolute;left:0px;top:197px;width:20px;height:13px;background:linear-gradient(#f9d99a,#f7c66c 60%,#f3b54b);"></div>
<div style="position:absolute;left:0px;top:210px;width:20px;height:1px;background:#c0ccdb;"></div>
<div style="position:absolute;left:0px;top:197px;width:19px;height:14px;line-height:14px;text-align:center;font-size:11px;color:#303a48;">9</div>
<div style="position:absolute;left:0px;top:224px;width:20px;height:1px;background:#c0ccdb;"></div>
<div style="position:absolute;left:0px;top:211px;width:19px;height:14px;line-height:14px;text-align:center;font-size:11px;color:#303a48;">10</div>
<div style="position:absolute;left:0px;top:238px;width:20px;height:1px;background:#c0ccdb;"></div>
<div style="position:absolute;left:0px;top:225px;width:19px;height:14px;line-height:14px;text-align:center;font-size:11px;color:#303a48;">11</div>
<div style="position:absolute;left:0px;top:252px;width:20px;height:1px;background:#c0ccdb;"></div>
<div style="position:absolute;left:0px;top:239px;width:19px;height:14px;line-height:14px;text-align:center;font-size:11px;color:#303a48;">12</div>
<div style="position:absolute;left:0px;top:266px;width:20px;height:1px;background:#c0ccdb;"></div>
<div style="position:absolute;left:0px;top:253px;width:19px;height:14px;line-height:14px;text-align:center;font-size:11px;color:#303a48;">13</div>
<div style="position:absolute;left:0px;top:280px;width:20px;height:1px;background:#c0ccdb;"></div>
<div style="position:absolute;left:0px;top:267px;width:19px;height:14px;line-height:14px;text-align:center;font-size:11px;color:#303a48;">14</div>
<div style="position:absolute;left:0px;top:294px;width:20px;height:1px;background:#c0ccdb;"></div>
<div style="position:absolute;left:0px;top:281px;width:19px;height:14px;line-height:14px;text-align:center;font-size:11px;color:#303a48;">15</div>
<div style="position:absolute;left:0px;top:308px;width:20px;height:1px;background:#c0ccdb;"></div>
<div style="position:absolute;left:0px;top:295px;width:19px;height:14px;line-height:14px;text-align:center;font-size:11px;color:#303a48;">16</div>
<div style="position:absolute;left:0px;top:322px;width:20px;height:1px;background:#c0ccdb;"></div>
<div style="position:absolute;left:0px;top:309px;width:19px;height:14px;line-height:14px;text-align:center;font-size:11px;color:#303a48;">17</div>
<div style="position:absolute;left:0px;top:336px;width:20px;height:1px;background:#c0ccdb;"></div>
<div style="position:absolute;left:0px;top:323px;width:19px;height:14px;line-height:14px;text-align:center;font-size:11px;color:#303a48;">18</div>
<div style="position:absolute;left:0px;top:350px;width:20px;height:1px;background:#c0ccdb;"></div>
<div style="position:absolute;left:0px;top:337px;width:19px;height:14px;line-height:14px;text-align:center;font-size:11px;color:#303a48;">19</div>
<div style="position:absolute;left:0px;top:364px;width:20px;height:1px;background:#c0ccdb;"></div>
<div style="position:absolute;left:0px;top:351px;width:19px;height:14px;line-height:14px;text-align:center;font-size:11px;color:#303a48;">20</div>
<div style="position:absolute;left:0px;top:378px;width:20px;height:1px;background:#c0ccdb;"></div>
<div style="position:absolute;left:0px;top:365px;width:19px;height:14px;line-height:14px;text-align:center;font-size:11px;color:#303a48;">21</div>
<div style="position:absolute;left:0px;top:395px;width:20px;height:1px;background:#c0ccdb;"></div>
<div style="position:absolute;left:0px;top:382px;width:19px;height:14px;line-height:14px;text-align:center;font-size:11px;color:#303a48;">22</div>
<div style="position:absolute;left:0px;top:409px;width:20px;height:1px;background:#c0ccdb;"></div>
<div style="position:absolute;left:0px;top:396px;width:19px;height:14px;line-height:14px;text-align:center;font-size:11px;color:#303a48;">23</div>
<div style="position:absolute;left:0px;top:423px;width:20px;height:1px;background:#c0ccdb;"></div>
<div style="position:absolute;left:0px;top:410px;width:19px;height:14px;line-height:14px;text-align:center;font-size:11px;color:#303a48;">24</div>
<div style="position:absolute;left:0px;top:437px;width:20px;height:1px;background:#c0ccdb;"></div>
<div style="position:absolute;left:0px;top:424px;width:19px;height:14px;line-height:14px;text-align:center;font-size:11px;color:#303a48;">25</div>
<div style="position:absolute;left:0px;top:451px;width:20px;height:1px;background:#c0ccdb;"></div>
<div style="position:absolute;left:0px;top:438px;width:19px;height:14px;line-height:14px;text-align:center;font-size:11px;color:#303a48;">26</div>
<div style="position:absolute;left:0px;top:465px;width:20px;height:1px;background:#c0ccdb;"></div>
<div style="position:absolute;left:0px;top:452px;width:19px;height:14px;line-height:14px;text-align:center;font-size:11px;color:#303a48;">27</div>
<div style="position:absolute;left:0px;top:479px;width:20px;height:1px;background:#c0ccdb;"></div>
<div style="position:absolute;left:0px;top:466px;width:19px;height:14px;line-height:14px;text-align:center;font-size:11px;color:#303a48;">28</div>
<div style="position:absolute;left:0px;top:493px;width:20px;height:1px;background:#c0ccdb;"></div>
<div style="position:absolute;left:0px;top:480px;width:19px;height:14px;line-height:14px;text-align:center;font-size:11px;color:#303a48;">29</div>
<div style="position:absolute;left:0px;top:507px;width:20px;height:1px;background:#c0ccdb;"></div>
<div style="position:absolute;left:0px;top:494px;width:19px;height:14px;line-height:14px;text-align:center;font-size:11px;color:#303a48;">30</div>
<div style="position:absolute;left:0px;top:521px;width:20px;height:1px;background:#c0ccdb;"></div>
<div style="position:absolute;left:0px;top:508px;width:19px;height:14px;line-height:14px;text-align:center;font-size:11px;color:#303a48;">31</div>
<div style="position:absolute;left:0px;top:535px;width:20px;height:1px;background:#c0ccdb;"></div>
<div style="position:absolute;left:0px;top:522px;width:19px;height:14px;line-height:14px;text-align:center;font-size:11px;color:#303a48;">32</div>
<div style="position:absolute;left:0px;top:549px;width:20px;height:1px;background:#c0ccdb;"></div>
<div style="position:absolute;left:0px;top:536px;width:19px;height:14px;line-height:14px;text-align:center;font-size:11px;color:#303a48;">33</div>
<div style="position:absolute;left:0px;top:563px;width:20px;height:1px;background:#c0ccdb;"></div>
<div style="position:absolute;left:0px;top:550px;width:19px;height:14px;line-height:14px;text-align:center;font-size:11px;color:#303a48;">34</div>
<div style="position:absolute;left:0px;top:577px;width:20px;height:1px;background:#c0ccdb;"></div>
<div style="position:absolute;left:0px;top:564px;width:19px;height:14px;line-height:14px;text-align:center;font-size:11px;color:#303a48;">35</div>
<div style="position:absolute;left:0px;top:591px;width:20px;height:1px;background:#c0ccdb;"></div>
<div style="position:absolute;left:0px;top:578px;width:19px;height:14px;line-height:14px;text-align:center;font-size:11px;color:#303a48;">36</div>
<div style="position:absolute;left:0px;top:605px;width:20px;height:1px;background:#c0ccdb;"></div>
<div style="position:absolute;left:0px;top:592px;width:19px;height:14px;line-height:14px;text-align:center;font-size:11px;color:#303a48;">37</div>
<div style="position:absolute;left:0px;top:619px;width:20px;height:1px;background:#c0ccdb;"></div>
<div style="position:absolute;left:0px;top:606px;width:19px;height:14px;line-height:14px;text-align:center;font-size:11px;color:#303a48;">38</div>
<div style="position:absolute;left:0px;top:620px;width:19px;height:14px;line-height:14px;text-align:center;font-size:11px;color:#303a48;">39</div>
<div style="position:absolute;left:48px;top:195px;width:54px;height:17px;border:3px solid #000;"></div>
<div style="position:absolute;left:97px;top:207px;width:7px;height:7px;background:#000;border:1px solid #fff;"></div>
<svg style="position:absolute;left:258px;top:323px" width="6" height="6"><polygon points="0,0 5,0 0,5" fill="#008000"/></svg>
<svg style="position:absolute;left:432px;top:396px" width="6" height="6"><polygon points="0,0 5,0 0,5" fill="#008000"/></svg>
<svg style="position:absolute;left:432px;top:452px" width="6" height="6"><polygon points="0,0 5,0 0,5" fill="#008000"/></svg>
<svg style="position:absolute;left:432px;top:508px" width="6" height="6"><polygon points="0,0 5,0 0,5" fill="#008000"/></svg>
<svg style="position:absolute;left:432px;top:564px" width="6" height="6"><polygon points="0,0 5,0 0,5" fill="#008000"/></svg>
<svg style="position:absolute;left:432px;top:620px" width="6" height="6"><polygon points="0,0 5,0 0,5" fill="#008000"/></svg>
<svg style="position:absolute;left:0;top:340px" width="80" height="80"><ellipse cx="34.4" cy="43" rx="18.2" ry="20.8" fill="none" stroke="#e21d27" stroke-width="4.4"/></svg>
<div style="position:absolute;left:0px;top:0px;width:1161px;height:38px;background:#dfeaf7;"></div>
<div style="position:absolute;left:0px;top:-4px;width:108px;height:42px;border:1px solid #a9bfd6;border-radius:3px;background:linear-gradient(#dae6f5,#d3e1f2 60%,#c6d8ee 60%,#c0d4ec);"></div>
<div style="position:absolute;left:1px;top:-3px;width:106px;height:40px;border:1px solid rgba(255,255,255,0.35);border-radius:2px;"></div>
<div style="position:absolute;left:-36px;top:23px;width:162px;height:14px;line-height:14px;text-align:center;font-size:11.4px;color:#3e6aaa;letter-spacing:0.05px;">Zwischenablage</div>
<svg style="position:absolute;left:95px;top:25px" width="9" height="9"><path d="M0.5 6.5 V0.5 H6.5" fill="none" stroke="#6d8bb5" stroke-width="1"/><rect x="3" y="3" width="5" height="5" fill="#fff" stroke="#7b93b3" stroke-width="1"/><path d="M4 4 L7 7 M7 5 V7 H5" stroke="#3c5f8f" fill="none" stroke-width="1"/></svg>
<div style="position:absolute;left:111px;top:-4px;width:196px;height:42px;border:1px solid #a9bfd6;border-radius:3px;background:linear-gradient(#dae6f5,#d3e1f2 60%,#c6d8ee 60%,#c0d4ec);"></div>
<div style="position:absolute;left:112px;top:-3px;width:194px;height:40px;border:1px solid rgba(255,255,255,0.35);border-radius:2px;"></div>
<div style="position:absolute;left:136px;top:23px;width:127px;height:14px;line-height:14px;text-align:center;font-size:11.4px;color:#3e6aaa;letter-spacing:0.28px;">Schriftart</div>
<svg style="position:absolute;left:294px;top:25px" width="9" height="9"><path d="M0.5 6.5 V0.5 H6.5" fill="none" stroke="#6d8bb5" stroke-width="1"/><rect x="3" y="3" width="5" height="5" fill="#fff" stroke="#7b93b3" stroke-width="1"/><path d="M4 4 L7 7 M7 5 V7 H5" stroke="#3c5f8f" fill="none" stroke-width="1"/></svg>
<div style="position:absolute;left:310px;top:-4px;width:165px;height:42px;border:1px solid #a9bfd6;border-radius:3px;background:linear-gradient(#dae6f5,#d3e1f2 60%,#c6d8ee 60%,#c0d4ec);"></div>
<div style="position:absolute;left:311px;top:-3px;width:163px;height:40px;border:1px solid rgba(255,255,255,0.35);border-radius:2px;"></div>
<div style="position:absolute;left:312px;top:23px;width:142px;height:14px;line-height:14px;text-align:center;font-size:11.4px;color:#3e6aaa;letter-spacing:0.28px;">Ausrichtung</div>
<svg style="position:absolute;left:462px;top:25px" width="9" height="9"><path d="M0.5 6.5 V0.5 H6.5" fill="none" stroke="#6d8bb5" stroke-width="1"/><rect x="3" y="3" width="5" height="5" fill="#fff" stroke="#7b93b3" stroke-width="1"/><path d="M4 4 L7 7 M7 5 V7 H5" stroke="#3c5f8f" fill="none" stroke-width="1"/></svg>
<div style="position:absolute;left:478px;top:-4px;width:136px;height:42px;border:1px solid #a9bfd6;border-radius:3px;background:linear-gradient(#dae6f5,#d3e1f2 60%,#c6d8ee 60%,#c0d4ec);"></div>
<div style="position:absolute;left:479px;top:-3px;width:134px;height:40px;border:1px solid rgba(255,255,255,0.35);border-radius:2px;"></div>
<div style="position:absolute;left:486px;top:23px;width:102px;height:14px;line-height:14px;text-align:center;font-size:11.4px;color:#3e6aaa;letter-spacing:0.28px;">Zahl</div>
<svg style="position:absolute;left:601px;top:25px" width="9" height="9"><path d="M0.5 6.5 V0.5 H6.5" fill="none" stroke="#6d8bb5" stroke-width="1"/><rect x="3" y="3" width="5" height="5" fill="#fff" stroke="#7b93b3" stroke-width="1"/><path d="M4 4 L7 7 M7 5 V7 H5" stroke="#3c5f8f" fill="none" stroke-width="1"/></svg>
<div style="position:absolute;left:617px;top:-4px;width:279px;height:42px;border:1px solid #a9bfd6;border-radius:3px;background:linear-gradient(#dae6f5,#d3e1f2 60%,#c6d8ee 60%,#c0d4ec);"></div>
<div style="position:absolute;left:618px;top:-3px;width:277px;height:40px;border:1px solid rgba(255,255,255,0.35);border-radius:2px;"></div>
<div style="position:absolute;left:676px;top:23px;width:160px;height:14px;line-height:14px;text-align:center;font-size:11.4px;color:#3e6aaa;letter-spacing:0.28px;">Formatvorlagen</div>
<div style="position:absolute;left:899px;top:-4px;width:92px;height:42px;border:1px solid #a9bfd6;border-radius:3px;background:linear-gradient(#dae6f5,#d3e1f2 60%,#c6d8ee 60%,#c0d4ec);"></div>
<div style="position:absolute;left:900px;top:-3px;width:90px;height:40px;border:1px solid rgba(255,255,255,0.35);border-radius:2px;"></div>
<div style="position:absolute;left:888px;top:23px;width:112px;height:14px;line-height:14px;text-align:center;font-size:11.4px;color:#3e6aaa;letter-spacing:0.28px;">Zellen</div>
<div style="position:absolute;left:993px;top:-4px;width:208px;height:42px;border:1px solid #a9bfd6;border-radius:3px;background:linear-gradient(#dae6f5,#d3e1f2 60%,#c6d8ee 60%,#c0d4ec);"></div>
<div style="position:absolute;left:994px;top:-3px;width:206px;height:40px;border:1px solid rgba(255,255,255,0.35);border-radius:2px;"></div>
<div style="position:absolute;left:1015px;top:23px;width:136px;height:14px;line-height:14px;text-align:center;font-size:11.4px;color:#3e6aaa;letter-spacing:0.28px;">Bearbeiten</div>
<div style="position:absolute;left:0px;top:38px;width:1161px;height:2px;background:#d8eefb;"></div>
<div style="position:absolute;left:0px;top:40px;width:1161px;height:4px;background:linear-gradient(#8ea7c1,#a9c1d9 50%,#7e95b0);"></div>
<div style="position:absolute;left:19px;top:-7px;font-size:11.4px;line-height:14px;color:#1e395b;letter-spacing:0.35px;">Einfügen</div>
<svg style="position:absolute;left:40px;top:11px" width="6" height="4"><polygon points="0,0 5,0 2.5,3" fill="#4d6185"/></svg>
<svg style="position:absolute;left:66px;top:0px" width="26" height="20"><path d="M14.5 8.5 L21 3.5" stroke="#6a6ea6" stroke-width="4.2" stroke-linecap="round"/><path d="M7.5 9.5 L15 7.3 L20 10 L13.5 16.5 Z" fill="#ece08a" stroke="#6f6640" stroke-width="1" stroke-linejoin="round"/><path d="M9 10 L14 9" stroke="#fffbe0" stroke-width="1.2"/></svg>
<div style="position:absolute;left:115px;top:-4px;width:80px;height:18px;border:1px solid #a8bdd7;border-radius:3px;background:linear-gradient(#e7eff9,#d5e2f3);"></div>
<div style="position:absolute;left:138px;top:-2px;width:1px;height:15px;background:#bccde3;"></div>
<div style="position:absolute;left:162px;top:-2px;width:1px;height:15px;background:#bccde3;"></div>
<div style="position:absolute;left:123px;top:-6px;font-family:'Liberation Serif',serif;font-weight:bold;font-size:13px;line-height:14px;color:#111;">F</div>
<div style="position:absolute;left:145px;top:-6px;font-family:'Liberation Serif',serif;font-weight:bold;font-size:13px;line-height:14px;color:#111;transform:skewX(-18deg);">K</div>
<div style="position:absolute;left:168px;top:-6px;font-family:'Liberation Sans',sans-serif;font-weight:bold;font-size:12px;line-height:14px;color:#111;">U</div>
<div style="position:absolute;left:168px;top:8px;width:9px;height:1px;background:#111;"></div>
<svg style="position:absolute;left:186px;top:2px" width="6" height="4"><polygon points="0,0 5,0 2.5,3" fill="#4d6185"/></svg>
<div style="position:absolute;left:199px;top:-4px;width:34px;height:18px;border:1px solid #a8bdd7;border-radius:3px;background:linear-gradient(#e7eff9,#d5e2f3);"></div>
<svg style="position:absolute;left:203px;top:0px" width="16" height="11"><path d="M1 1 H14 M1 4.5 H14 M1 0 V8 M7.5 0 V8 M14 0 V8" stroke="#333" stroke-width="1" stroke-dasharray="1 1.2" fill="none"/><rect x="1" y="9" width="13" height="1.2" fill="#111"/></svg>
<svg style="position:absolute;left:224px;top:2px" width="6" height="4"><polygon points="0,0 5,0 2.5,3" fill="#4d6185"/></svg>
<div style="position:absolute;left:236px;top:-4px;width:67px;height:18px;border:1px solid #a8bdd7;border-radius:3px;background:linear-gradient(#e7eff9,#d5e2f3);"></div>
<div style="position:absolute;left:269px;top:-2px;width:1px;height:15px;background:#bccde3;"></div>
<svg style="position:absolute;left:240px;top:-2px" width="18" height="14"><path d="M4 4 L9 0 L14 5 L9 9 Z" fill="#fff" stroke="#333" stroke-width="1"/><path d="M13 2 Q16 4 14 7" stroke="#3b6fc4" stroke-width="1.6" fill="none"/><rect x="0" y="9" width="16" height="4" fill="#fff000"/></svg>
<svg style="position:absolute;left:261px;top:2px" width="6" height="4"><polygon points="0,0 5,0 2.5,3" fill="#4d6185"/></svg>
<div style="position:absolute;left:275px;top:-5px;font-family:'Liberation Serif',serif;font-weight:bold;font-size:14px;line-height:13px;color:#1e3c70;">A</div>
<div style="position:absolute;left:273px;top:7px;width:16px;height:4px;background:#e0101b;"></div>
<svg style="position:absolute;left:295px;top:2px" width="6" height="4"><polygon points="0,0 5,0 2.5,3" fill="#4d6185"/></svg>
<div style="position:absolute;left:314px;top:-4px;width:69px;height:18px;border:1px solid #a8bdd7;border-radius:3px;background:linear-gradient(#e7eff9,#d5e2f3);"></div>
<div style="position:absolute;left:337px;top:-2px;width:1px;height:15px;background:#bccde3;"></div>
<div style="position:absolute;left:360px;top:-2px;width:1px;height:15px;background:#bccde3;"></div>
<div style="position:absolute;left:315px;top:-3px;width:22px;height:16px;background:linear-gradient(#f8d99b,#f5c46a 60%,#fbe08f);"></div>
<div style="position:absolute;left:319px;top:1px;width:14px;height:1.2px;background:#111;"></div>
<div style="position:absolute;left:319px;top:3px;width:10px;height:1.2px;background:#111;"></div>
<div style="position:absolute;left:319px;top:5px;width:14px;height:1.2px;background:#111;"></div>
<div style="position:absolute;left:319px;top:7px;width:10px;height:1.2px;background:#111;"></div>
<div style="position:absolute;left:342.0px;top:1px;width:14px;height:1.2px;background:#111;"></div>
<div style="position:absolute;left:344.0px;top:3px;width:10px;height:1.2px;background:#111;"></div>
<div style="position:absolute;left:342.0px;top:5px;width:14px;height:1.2px;background:#111;"></div>
<div style="position:absolute;left:344.0px;top:7px;width:10px;height:1.2px;background:#111;"></div>
<div style="position:absolute;left:365px;top:1px;width:14px;height:1.2px;background:#111;"></div>
<div style="position:absolute;left:369px;top:3px;width:10px;height:1.2px;background:#111;"></div>
<div style="position:absolute;left:365px;top:5px;width:14px;height:1.2px;background:#111;"></div>
<div style="position:absolute;left:369px;top:7px;width:10px;height:1.2px;background:#111;"></div>
<div style="position:absolute;left:387px;top:-4px;width:44px;height:18px;border:1px solid #a8bdd7;border-radius:3px;background:linear-gradient(#e7eff9,#d5e2f3);"></div>
<div style="position:absolute;left:408px;top:-2px;width:1px;height:15px;background:#bccde3;"></div>
<svg style="position:absolute;left:386px;top:0px" width="22" height="12"><path d="M4 1.5 L8.5 -1.5 L8.5 4.5 Z" fill="#4a78c4"/><rect x="7" y="0.8" width="3" height="1.4" fill="#4a78c4"/><rect x="11" y="-0.5" width="9" height="1.6" fill="#000"/><rect x="11" y="2.3" width="6" height="1.6" fill="#000"/><rect x="6" y="4.9" width="4" height="1.2" fill="#000"/><rect x="11" y="4.9" width="9" height="1.2" fill="#000"/><rect x="6" y="6.8" width="4" height="1.2" fill="#000"/><rect x="11" y="6.8" width="2" height="1.2" fill="#000"/><rect x="11.5" y="8.9" width="1" height="1" fill="#000"/></svg>
<svg style="position:absolute;left:408px;top:0px" width="22" height="12"><path d="M9 1.5 L4.5 -1.5 L4.5 4.5 Z" fill="#4a78c4"/><rect x="3" y="0.8" width="3" height="1.4" fill="#4a78c4"/><rect x="11" y="-0.5" width="9" height="1.6" fill="#000"/><rect x="11" y="2.3" width="6" height="1.6" fill="#000"/><rect x="6" y="4.9" width="4" height="1.2" fill="#000"/><rect x="11" y="4.9" width="9" height="1.2" fill="#000"/><rect x="6" y="6.8" width="4" height="1.2" fill="#000"/><rect x="11" y="6.8" width="2" height="1.2" fill="#000"/><rect x="11.5" y="8.9" width="1" height="1" fill="#000"/></svg>
<div style="position:absolute;left:435px;top:-2px;width:1px;height:17px;background:#b6c8de;"></div>
<svg style="position:absolute;left:442px;top:-2px" width="17" height="13"><rect x="0.5" y="0.5" width="15" height="11" fill="#fff" stroke="#233044" stroke-width="1"/><path d="M0.5 8.5 H15.5 M7.5 8.5 V11.5" stroke="#233044" stroke-width="1"/><text x="8" y="7" font-size="8.5" font-weight="bold" text-anchor="middle" font-family="Liberation Serif" fill="#111">a</text><path d="M1.5 5 H4.5 M11.5 5 H14.5" stroke="#111" stroke-width="1"/><path d="M1.5 5 L3 3.5 M1.5 5 L3 6.5 M14.5 5 L13 3.5 M14.5 5 L13 6.5" stroke="#111" stroke-width="0.8"/><rect x="1.5" y="9.5" width="5" height="1.2" fill="#cfd8e4"/><rect x="8.5" y="9.5" width="6" height="1.2" fill="#cfd8e4"/></svg>
<svg style="position:absolute;left:462px;top:2px" width="6" height="4"><polygon points="0,0 5,0 2.5,3" fill="#4d6185"/></svg>
<div style="position:absolute;left:482px;top:-4px;width:80px;height:18px;border:1px solid #a8bdd7;border-radius:3px;background:linear-gradient(#e7eff9,#d5e2f3);"></div>
<div style="position:absolute;left:515px;top:-2px;width:1px;height:15px;background:#bccde3;"></div>
<div style="position:absolute;left:539px;top:-2px;width:1px;height:15px;background:#bccde3;"></div>
<svg style="position:absolute;left:484px;top:-4px" width="20" height="18"><rect x="2" y="0" width="16" height="7.5" fill="#4f86cc" stroke="#24508e" stroke-width="0.8"/><rect x="5" y="2" width="9" height="3" fill="#9cc3ee"/><path d="M3 11.5 H9" stroke="#6a5a20" stroke-width="1.4"/><path d="M9 9.5 L11 11.5 L9 13.5" stroke="#6a5a20" stroke-width="1" fill="none"/><ellipse cx="14" cy="6" rx="3.2" ry="1.3" fill="#f1c232" stroke="#a27a10" stroke-width="0.6"/><ellipse cx="14" cy="8" rx="3.2" ry="1.3" fill="#f1c232" stroke="#a27a10" stroke-width="0.6"/><ellipse cx="14" cy="10" rx="3.2" ry="1.3" fill="#f1c232" stroke="#a27a10" stroke-width="0.6"/><ellipse cx="14" cy="12" rx="3.2" ry="1.3" fill="#f1c232" stroke="#a27a10" stroke-width="0.6"/><ellipse cx="14" cy="14" rx="3.2" ry="1.3" fill="#f1c232" stroke="#a27a10" stroke-width="0.6"/></svg>
<svg style="position:absolute;left:508px;top:1px" width="6" height="4"><polygon points="0,0 5,0 2.5,3" fill="#4d6185"/></svg>
<div style="position:absolute;left:522px;top:-4px;font-size:12.5px;line-height:13px;color:#111;">%</div>
<div style="position:absolute;left:543px;top:-4px;font-size:12px;line-height:13px;color:#111;transform:scaleX(0.8);transform-origin:left;">000</div>
<div style="position:absolute;left:565px;top:-4px;width:45px;height:18px;border:1px solid #a8bdd7;border-radius:3px;background:linear-gradient(#e7eff9,#d5e2f3);"></div>
<div style="position:absolute;left:588px;top:-2px;width:1px;height:15px;background:#bccde3;"></div>
<div style="position:absolute;left:571px;top:3px;font-size:9.5px;line-height:9px;color:#111;font-weight:bold;">,00</div>
<div style="position:absolute;left:571px;top:-6px;font-size:9.5px;line-height:9px;color:#111;font-weight:bold;"><span style="color:#3d6fc0">&lt;</span>,0</div>
<div style="position:absolute;left:593px;top:-6px;font-size:9.5px;line-height:9px;color:#111;font-weight:bold;">,00</div>
<svg style="position:absolute;left:590px;top:4px" width="9" height="7"><path d="M0.5 3.5 H7 M4 0.8 L7 3.5 L4 6.2" stroke="#3d6fc0" stroke-width="1.4" fill="none"/></svg>
<div style="position:absolute;left:598px;top:3px;font-size:9.5px;line-height:9px;color:#111;font-weight:bold;">,0</div>
<div style="position:absolute;left:638px;top:-8px;font-size:11.4px;line-height:14px;color:#1e395b;white-space:nowrap;letter-spacing:0.35px;">Bedingte</div>
<div style="position:absolute;left:623px;top:6px;font-size:11.4px;line-height:14px;color:#1e395b;white-space:nowrap;letter-spacing:0.35px;">Formatierung</div>
<svg style="position:absolute;left:697px;top:12px" width="6" height="4"><polygon points="0,0 5,0 2.5,3" fill="#4d6185"/></svg>
<div style="position:absolute;left:713px;top:-8px;font-size:11.4px;line-height:14px;color:#1e395b;white-space:nowrap;letter-spacing:0.35px;">Als Tabelle</div>
<div style="position:absolute;left:706px;top:6px;font-size:11.4px;line-height:14px;color:#1e395b;white-space:nowrap;letter-spacing:0.35px;">formatieren</div>
<svg style="position:absolute;left:770px;top:12px" width="6" height="4"><polygon points="0,0 5,0 2.5,3" fill="#4d6185"/></svg>
<div style="position:absolute;left:779px;top:-8px;font-size:11.4px;line-height:14px;color:#1e395b;white-space:nowrap;letter-spacing:0.35px;">Zellenformatvorlagen</div>
<svg style="position:absolute;left:831px;top:11px" width="6" height="4"><polygon points="0,0 5,0 2.5,3" fill="#4d6185"/></svg>
<svg style="position:absolute;left:905px;top:1px" width="18" height="17"><rect x="1.5" y="3.5" width="14" height="11" fill="#fff" stroke="#555" stroke-width="1"/><path d="M1.5 7 H15.5 M1.5 10.5 H15.5 M6 3.5 V14.5 M11 3.5 V14.5" stroke="#999" stroke-width="1"/><rect x="6" y="7" width="5" height="3.5" fill="#8d9bd6"/><path d="M1 1.5 H16" stroke="#333" stroke-dasharray="1 1"/></svg>
<div style="position:absolute;left:925px;top:3px;font-size:11.6px;line-height:14px;color:#1e395b;white-space:nowrap;letter-spacing:0.35px;">Format</div>
<svg style="position:absolute;left:966px;top:8px" width="6" height="4"><polygon points="0,0 5,0 2.5,3" fill="#4d6185"/></svg>
<svg style="position:absolute;left:999px;top:3px" width="18" height="14"><path d="M2 9 L9 2 Q11 0.5 13 2 L14 3 Q15.5 5 14 6.5 L7 13 Q5 14 3.5 12.5 L2 11 Q1 10 2 9 Z" fill="#fbfbfb" stroke="#555" stroke-width="1"/><path d="M6 12.5 H16" stroke="#111" stroke-width="1"/></svg>
<svg style="position:absolute;left:1019px;top:7px" width="6" height="4"><polygon points="0,0 5,0 2.5,3" fill="#4d6185"/></svg>
<div style="position:absolute;left:1041px;top:-8px;font-size:11.4px;line-height:14px;color:#1e395b;white-space:nowrap;letter-spacing:0.35px;">Sortieren</div>
<div style="position:absolute;left:1031px;top:6px;font-size:11.4px;line-height:14px;color:#1e395b;white-space:nowrap;letter-spacing:0.35px;">und Filtern</div>
<svg style="position:absolute;left:1093px;top:12px" width="6" height="4"><polygon points="0,0 5,0 2.5,3" fill="#4d6185"/></svg>
<div style="position:absolute;left:1102px;top:-8px;font-size:11.4px;line-height:14px;color:#1e395b;white-space:nowrap;letter-spacing:0.35px;">Suchen und</div>
<div style="position:absolute;left:1101px;top:6px;font-size:11.4px;line-height:14px;color:#1e395b;white-space:nowrap;letter-spacing:0.35px;">Auswählen</div>
<div style="position:absolute;left:0px;top:43px;width:1161px;height:1px;background:#7f95b0;"></div>
<div style="position:absolute;left:0px;top:44px;width:1161px;height:20px;background:#fff;"></div>
<div style="position:absolute;left:62px;top:44.5px;font-size:12.3px;line-height:20px;color:#111;">B9</div>
<svg style="position:absolute;left:143px;top:52px" width="9" height="6"><polygon points="0.5,0.5 8.5,0.5 4.5,5" fill="#000"/></svg>
<div style="position:absolute;left:157px;top:43px;width:85px;height:21px;border-radius:10px 0 0 10px;background:linear-gradient(#f3f7fc,#d3e0f1 50%,#aac3e6);border:1px solid #95abc8;border-right:1px solid #8aa0bd;"></div>
<svg style="position:absolute;left:163px;top:48px" width="12" height="12"><defs><radialGradient id="sph" cx="0.4" cy="0.35" r="0.6"><stop offset="0" stop-color="#f4f6f8"/><stop offset="0.6" stop-color="#c8d0da"/><stop offset="1" stop-color="#b9c8dc" stop-opacity="0.3"/></radialGradient></defs><circle cx="5.5" cy="5.5" r="4.5" fill="url(#sph)"/></svg>
<svg style="position:absolute;left:222px;top:45px" width="18" height="16"><text x="1" y="12.5" font-family="Liberation Serif" font-style="italic" font-weight="bold" font-size="14" fill="#3a4150">f</text><text x="6" y="13" font-family="Liberation Serif" font-style="italic" font-weight="bold" font-size="10.5" fill="#3a4150">x</text></svg>
<div style="position:absolute;left:0px;top:64px;width:1161px;height:1px;background:#7f95b0;"></div>
<div style="position:absolute;left:0px;top:65px;width:1161px;height:3px;background:linear-gradient(#f0faff,#dbe8f5);"></div>
</body></html>
